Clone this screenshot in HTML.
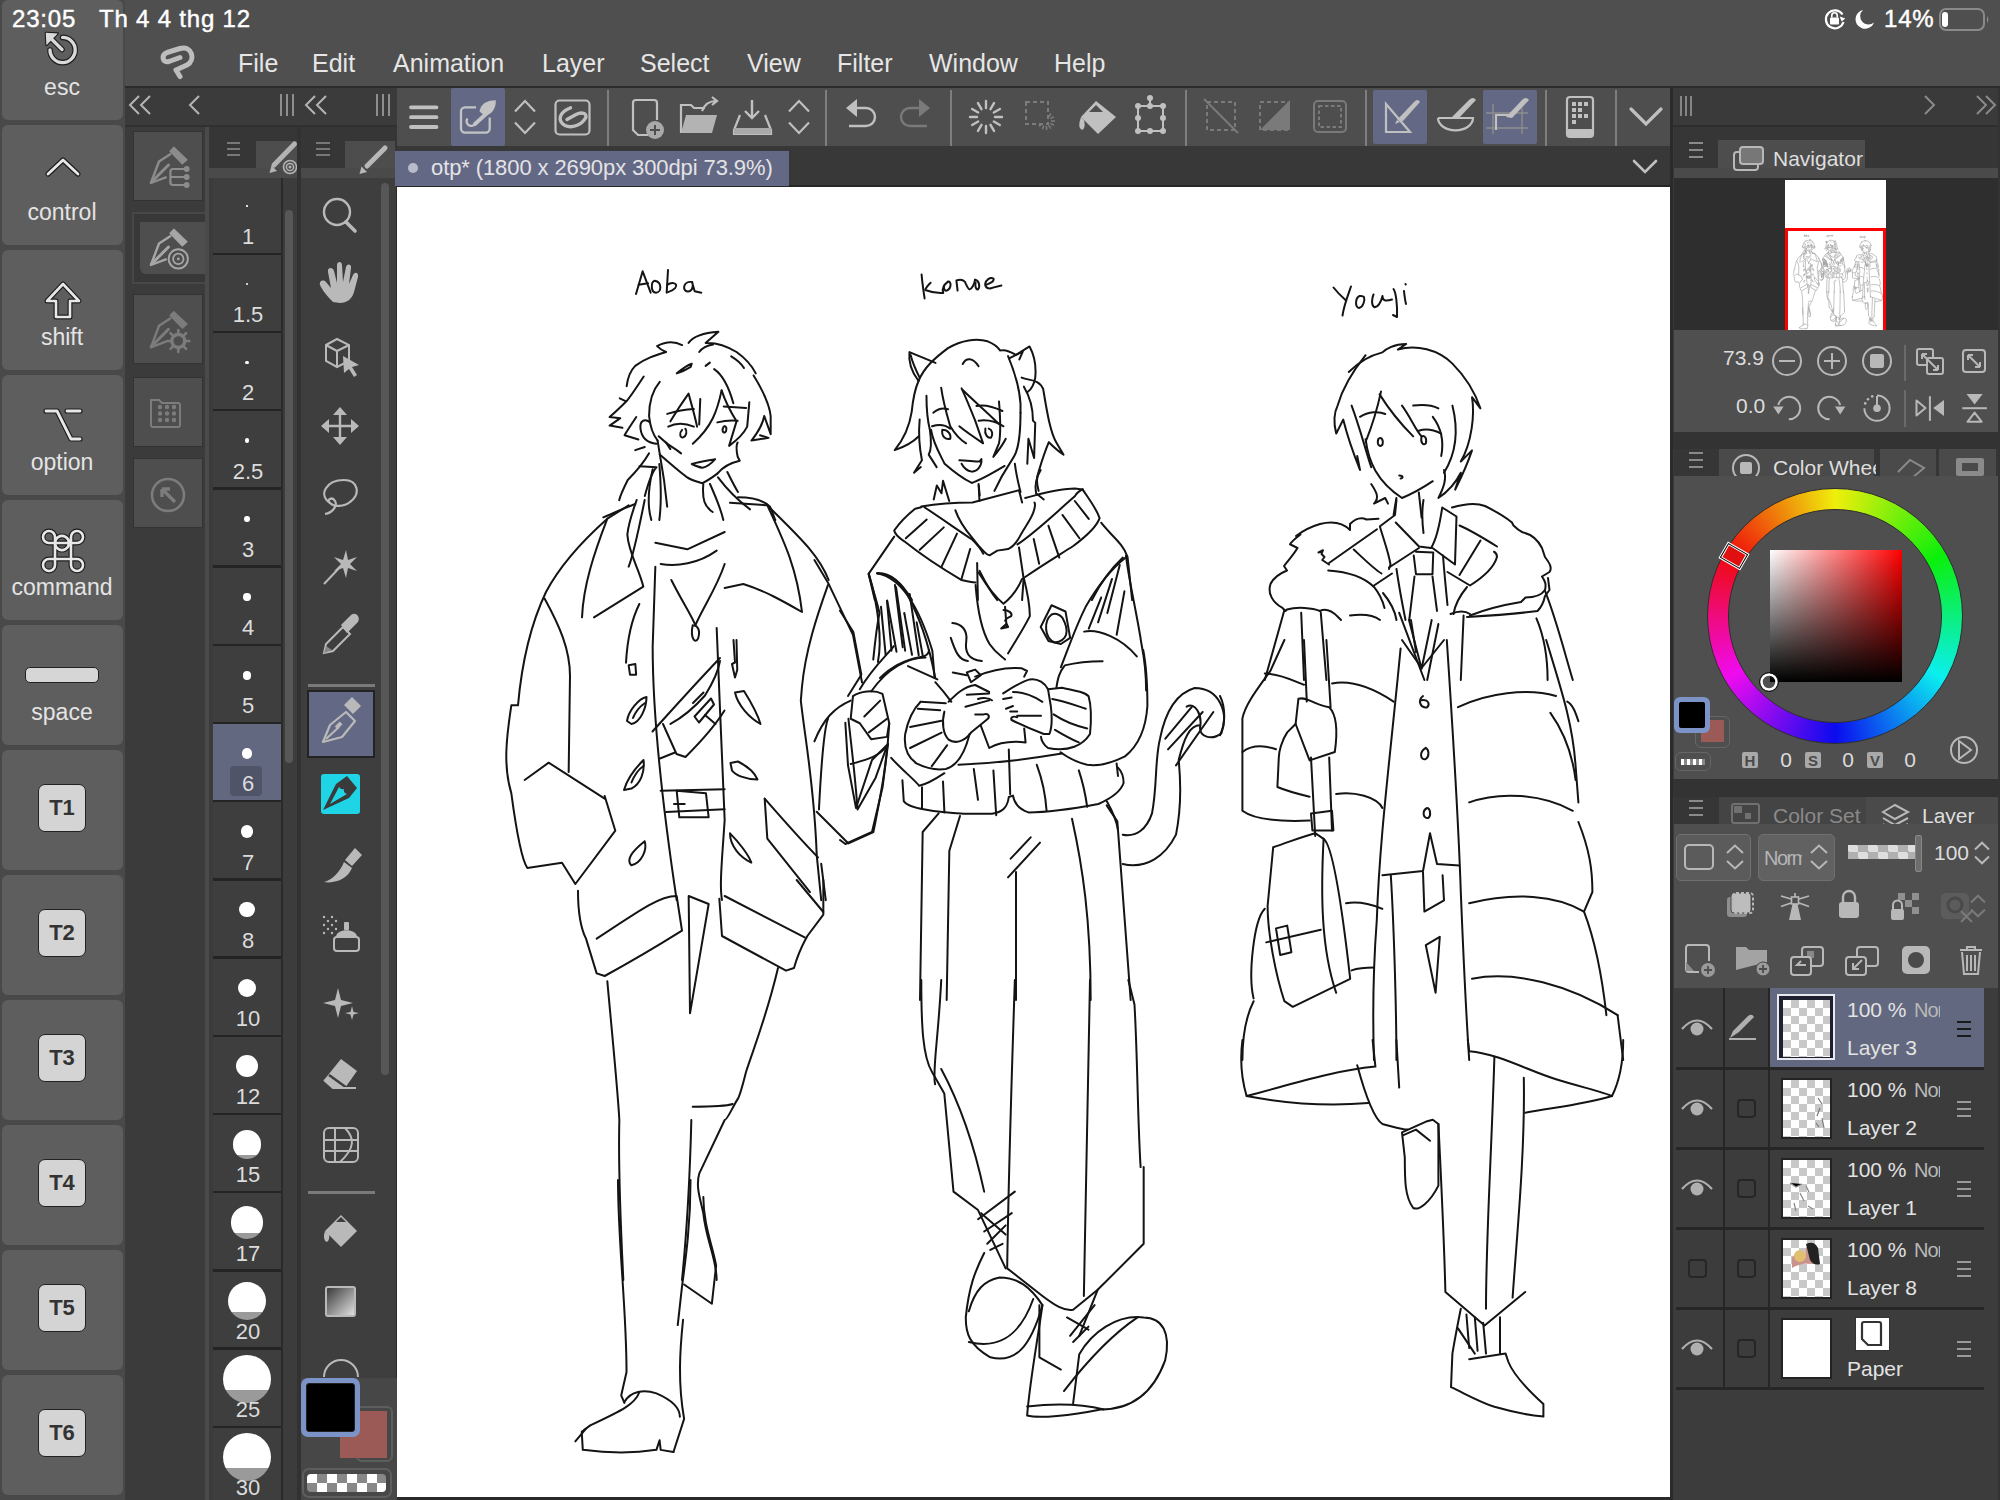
<!DOCTYPE html><html><head><meta charset="utf-8"><style>
*{margin:0;padding:0;box-sizing:border-box}
html,body{width:2000px;height:1500px;overflow:hidden;background:#3b3b3b;font-family:"Liberation Sans",sans-serif}
.ab{position:absolute}
.t{position:absolute;white-space:nowrap;line-height:1}
svg{position:absolute;overflow:visible}
</style></head><body>
<div class="ab" style="left:0px;top:0px;width:2000px;height:86px;background:#4f4f4f;"></div>
<div class="ab" style="left:0px;top:86px;width:2000px;height:2px;background:#2c2c2c;"></div>
<div class="ab" style="left:0px;top:0px;width:125px;height:1500px;background:#494949;"></div>
<div class="ab" style="left:2px;top:0px;width:121px;height:120px;background:#5e5e5e;border-radius:6px"></div>
<div class="ab" style="left:2px;top:125px;width:121px;height:120px;background:#5e5e5e;border-radius:6px"></div>
<div class="ab" style="left:2px;top:250px;width:121px;height:120px;background:#5e5e5e;border-radius:6px"></div>
<div class="ab" style="left:2px;top:375px;width:121px;height:120px;background:#5e5e5e;border-radius:6px"></div>
<div class="ab" style="left:2px;top:500px;width:121px;height:120px;background:#5e5e5e;border-radius:6px"></div>
<div class="ab" style="left:2px;top:625px;width:121px;height:120px;background:#5e5e5e;border-radius:6px"></div>
<div class="ab" style="left:2px;top:750px;width:121px;height:120px;background:#5e5e5e;border-radius:6px"></div>
<div class="ab" style="left:2px;top:875px;width:121px;height:120px;background:#5e5e5e;border-radius:6px"></div>
<div class="ab" style="left:2px;top:1000px;width:121px;height:120px;background:#5e5e5e;border-radius:6px"></div>
<div class="ab" style="left:2px;top:1125px;width:121px;height:120px;background:#5e5e5e;border-radius:6px"></div>
<div class="ab" style="left:2px;top:1250px;width:121px;height:120px;background:#5e5e5e;border-radius:6px"></div>
<div class="ab" style="left:2px;top:1375px;width:121px;height:120px;background:#5e5e5e;border-radius:6px"></div>
<div class="t" style="left:-0.5px;top:76px;width:125px;text-align:center;font-size:23px;color:#e4e4e4;">esc</div>
<div class="t" style="left:-0.5px;top:201px;width:125px;text-align:center;font-size:23px;color:#e4e4e4;">control</div>
<div class="t" style="left:-0.5px;top:326px;width:125px;text-align:center;font-size:23px;color:#e4e4e4;">shift</div>
<div class="t" style="left:-0.5px;top:451px;width:125px;text-align:center;font-size:23px;color:#e4e4e4;">option</div>
<div class="t" style="left:-0.5px;top:576px;width:125px;text-align:center;font-size:23px;color:#e4e4e4;">command</div>
<div class="t" style="left:-0.5px;top:701px;width:125px;text-align:center;font-size:23px;color:#e4e4e4;">space</div>
<svg style="left:0px;top:0px" width="10" height="10" viewBox="0 0 10 10"><path d="M62.6 37.4 A12.6 12.6 0 1 1 50 50 M62 49.5 L51 38.5" fill="none" stroke="#1e1e1e" stroke-width="5.6" stroke-linecap="round"/><path d="M45.8 32.8 L57.8 33.4 L46.4 45.2 Z" fill="#1e1e1e" stroke="#1e1e1e" stroke-width="2.2" stroke-linejoin="round"/><path d="M62.6 37.4 A12.6 12.6 0 1 1 50 50 M62 49.5 L51 38.5" fill="none" stroke="#dadada" stroke-width="3.4" stroke-linecap="round"/><path d="M45.8 32.8 L57.8 33.4 L46.4 45.2 Z" fill="#dadada"/></svg>
<svg style="left:40px;top:150px" width="46" height="30" viewBox="0 0 46 30"><path d="M8 24 L23 10 L38 24" fill="none" stroke="#1e1e1e" stroke-width="5.199999999999999" stroke-linecap="round" stroke-linejoin="round"/><path d="M8 24 L23 10 L38 24" fill="none" stroke="#e8e8e8" stroke-width="2.8" stroke-linecap="round" stroke-linejoin="round"/></svg>
<svg style="left:40px;top:280px" width="46" height="46" viewBox="0 0 46 46"><path d="M23 4 L39 21 L30 21 L30 37 L16 37 L16 21 L7 21 Z" fill="none" stroke="#1e1e1e" stroke-width="5.0" stroke-linecap="round" stroke-linejoin="round"/><path d="M23 4 L39 21 L30 21 L30 37 L16 37 L16 21 L7 21 Z" fill="none" stroke="#e8e8e8" stroke-width="2.6" stroke-linecap="round" stroke-linejoin="round"/></svg>
<svg style="left:40px;top:405px" width="46" height="40" viewBox="0 0 46 40"><path d="M6 6 L17 6 L31 34 L40 34 M27 6 L40 6" fill="none" stroke="#1e1e1e" stroke-width="5.199999999999999" stroke-linecap="round" stroke-linejoin="round"/><path d="M6 6 L17 6 L31 34 L40 34 M27 6 L40 6" fill="none" stroke="#e8e8e8" stroke-width="2.8" stroke-linecap="round" stroke-linejoin="round"/></svg>
<svg style="left:40px;top:528px" width="46" height="46" viewBox="0 0 46 46"><path d="M15 15 L31 15 L31 31 L15 31 Z M15 15 A7 7 0 1 1 15 15.01 M15 15 L15 9 A6 6 0 1 0 9 15 L15 15 M31 15 L31 9 A6 6 0 1 1 37 15 L31 15 M31 31 L37 31 A6 6 0 1 1 31 37 L31 31 M15 31 L9 31 A6 6 0 1 0 15 37 L15 31" fill="none" stroke="#1e1e1e" stroke-width="5.0" stroke-linecap="round" stroke-linejoin="round"/><path d="M15 15 L31 15 L31 31 L15 31 Z M15 15 A7 7 0 1 1 15 15.01 M15 15 L15 9 A6 6 0 1 0 9 15 L15 15 M31 15 L31 9 A6 6 0 1 1 37 15 L31 15 M31 31 L37 31 A6 6 0 1 1 31 37 L31 31 M15 31 L9 31 A6 6 0 1 0 15 37 L15 31" fill="none" stroke="#e8e8e8" stroke-width="2.6" stroke-linecap="round" stroke-linejoin="round"/></svg>
<div class="ab" style="left:25px;top:667px;width:74px;height:16px;background:#d6d6d6;border:1.5px solid #222;border-radius:5px"></div>
<div class="ab" style="left:38px;top:784px;width:48px;height:48px;background:#d4d4d4;border:1.5px solid #222;border-radius:7px"></div>
<div class="t" style="left:32.0px;top:797px;width:60px;text-align:center;font-size:22px;color:#333;font-weight:bold">T1</div>
<div class="ab" style="left:38px;top:909px;width:48px;height:48px;background:#d4d4d4;border:1.5px solid #222;border-radius:7px"></div>
<div class="t" style="left:32.0px;top:922px;width:60px;text-align:center;font-size:22px;color:#333;font-weight:bold">T2</div>
<div class="ab" style="left:38px;top:1034px;width:48px;height:48px;background:#d4d4d4;border:1.5px solid #222;border-radius:7px"></div>
<div class="t" style="left:32.0px;top:1047px;width:60px;text-align:center;font-size:22px;color:#333;font-weight:bold">T3</div>
<div class="ab" style="left:38px;top:1159px;width:48px;height:48px;background:#d4d4d4;border:1.5px solid #222;border-radius:7px"></div>
<div class="t" style="left:32.0px;top:1172px;width:60px;text-align:center;font-size:22px;color:#333;font-weight:bold">T4</div>
<div class="ab" style="left:38px;top:1284px;width:48px;height:48px;background:#d4d4d4;border:1.5px solid #222;border-radius:7px"></div>
<div class="t" style="left:32.0px;top:1297px;width:60px;text-align:center;font-size:22px;color:#333;font-weight:bold">T5</div>
<div class="ab" style="left:38px;top:1409px;width:48px;height:48px;background:#d4d4d4;border:1.5px solid #222;border-radius:7px"></div>
<div class="t" style="left:32.0px;top:1422px;width:60px;text-align:center;font-size:22px;color:#333;font-weight:bold">T6</div>
<div class="t" style="left:12px;top:7px;font-size:24px;color:#ffffff;-webkit-text-stroke:0.45px #fff;letter-spacing:0.8px">23:05</div>
<div class="t" style="left:99px;top:7px;font-size:24px;color:#ffffff;-webkit-text-stroke:0.45px #fff;letter-spacing:0.8px">Th 4 4 thg 12</div>
<div class="t" style="left:1884px;top:7px;font-size:24px;color:#ffffff;-webkit-text-stroke:0.45px #fff;letter-spacing:0.8px">14%</div>
<svg style="left:0px;top:0px" width="10" height="10" viewBox="0 0 10 10"><path d="M1842.5 14.5 A9 9 0 1 0 1843.5 22" fill="none" stroke="#fff" stroke-width="2.2"/><path d="M1839 17.5 L1845 17.5 L1842.5 21.5 Z" fill="#fff" transform="rotate(20 1842 19)"/><rect x="1830" y="17.5" width="9" height="7" rx="1" fill="#fff"/><path d="M1831.8 17.5 V15.5 A2.7 2.7 0 0 1 1837.2 15.5 V17.5" fill="none" stroke="#fff" stroke-width="1.6"/></svg>
<svg style="left:0px;top:0px" width="10" height="10" viewBox="0 0 10 10"><path d="M1863 10 A9.5 9.5 0 1 0 1874 22.5 A8 8 0 0 1 1863 10 Z" fill="#fff"/></svg>
<div class="ab" style="left:1939px;top:8px;width:46px;height:23px;background:transparent;border:2px solid #8a8a8a;border-radius:7px"></div>
<div class="ab" style="left:1942px;top:12px;width:6px;height:15px;background:#fff;border-radius:3px"></div>
<svg style="left:0px;top:0px" width="10" height="10" viewBox="0 0 10 10"><path d="M1987 16 Q1990 19.5 1987 23 Z" fill="#8a8a8a"/></svg>
<svg style="left:0px;top:0px" width="10" height="10" viewBox="0 0 10 10"><path d="M180 57.5 L169 61.5 C162 63 161 55 167 52.5 L180 48.5 C192 45 196 60 187 65 L176 70 L180 76.5" fill="none" stroke="#bdbdbd" stroke-width="5" stroke-linecap="round" stroke-linejoin="round"/></svg>
<div class="t" style="left:238px;top:51px;font-size:25px;color:#e6e6e6;">File</div>
<div class="t" style="left:312px;top:51px;font-size:25px;color:#e6e6e6;">Edit</div>
<div class="t" style="left:393px;top:51px;font-size:25px;color:#e6e6e6;">Animation</div>
<div class="t" style="left:542px;top:51px;font-size:25px;color:#e6e6e6;">Layer</div>
<div class="t" style="left:640px;top:51px;font-size:25px;color:#e6e6e6;">Select</div>
<div class="t" style="left:747px;top:51px;font-size:25px;color:#e6e6e6;">View</div>
<div class="t" style="left:837px;top:51px;font-size:25px;color:#e6e6e6;">Filter</div>
<div class="t" style="left:929px;top:51px;font-size:25px;color:#e6e6e6;">Window</div>
<div class="t" style="left:1054px;top:51px;font-size:25px;color:#e6e6e6;">Help</div>
<div class="ab" style="left:125px;top:88px;width:272px;height:1412px;background:#3b3b3b;"></div>
<svg style="left:0px;top:0px" width="10" height="10" viewBox="0 0 10 10"><path d="M139 96 L130 105 L139 114 M150 96 L141 105 L150 114 " fill="none" stroke="#b4b4b4" stroke-width="2"/><path d="M199 96 L190 105 L199 114 " fill="none" stroke="#b4b4b4" stroke-width="2"/><path d="M315 96 L306 105 L315 114 M326 96 L317 105 L326 114 " fill="none" stroke="#b4b4b4" stroke-width="2"/></svg>
<svg style="left:0px;top:0px" width="10" height="10" viewBox="0 0 10 10"><path d="M281 94 V116 M287 94 V116 M293 94 V116" stroke="#8e8e8e" stroke-width="2"/><path d="M377 94 V116 M383 94 V116 M389 94 V116" stroke="#8e8e8e" stroke-width="2"/></svg>
<div class="ab" style="left:125px;top:125px;width:272px;height:2px;background:#303030;"></div>
<div class="ab" style="left:205px;top:127px;width:4px;height:1373px;background:#4a4a4a;"></div>
<div class="ab" style="left:133px;top:294px;width:70px;height:70px;background:#4e4e4e;border:1.5px solid #333"></div>
<div class="ab" style="left:133px;top:377px;width:70px;height:70px;background:#4e4e4e;border:1.5px solid #333"></div>
<div class="ab" style="left:133px;top:458px;width:70px;height:70px;background:#4e4e4e;border:1.5px solid #333"></div>
<div class="ab" style="left:132px;top:212px;width:73px;height:72px;background:#383838;border:2px solid #474747;border-right:none"></div>
<div class="ab" style="left:140px;top:222px;width:65px;height:52px;background:#4e4e4e;border-radius:0 0 0 6px"></div>
<div class="ab" style="left:133px;top:131px;width:70px;height:70px;background:#4e4e4e;border:1.5px solid #333"></div>
<svg style="left:0px;top:0px" width="10" height="10" viewBox="0 0 10 10"><g transform="translate(150.5,183)" fill="none" stroke="#8c8c8c" stroke-linejoin="round" stroke-linecap="round"><path d="M19.7 -31.7 L23.3 -35.6 L36.3 -23.2 L31.8 -19.2 Z" fill="#8c8c8c" stroke-width="1.5"/><path d="M19.7 -28.8 L8.5 -21.5 L0.4 0 L15.3 -5.6" stroke-width="2.4"/><path d="M1 -1 L18 -18" stroke-width="3"/></g><path d="M186.7 169 H173 Q170.4 169 170.4 171.5 V182.5 Q170.4 185 173 185 H186.7 M170.4 177 H186.7" fill="none" stroke="#8c8c8c" stroke-width="2.2"/><circle cx="186.7" cy="169" r="2.9" fill="#8c8c8c"/><circle cx="186.7" cy="177" r="2.9" fill="#8c8c8c"/><circle cx="186.7" cy="185" r="2.9" fill="#8c8c8c"/></svg>
<svg style="left:0px;top:0px" width="10" height="10" viewBox="0 0 10 10"><g transform="translate(150.5,265)" fill="none" stroke="#a6a6a6" stroke-linejoin="round" stroke-linecap="round"><path d="M19.7 -31.7 L23.3 -35.6 L36.3 -23.2 L31.8 -19.2 Z" fill="#a6a6a6" stroke-width="1.5"/><path d="M19.7 -28.8 L8.5 -21.5 L0.4 0 L15.3 -5.6" stroke-width="2.4"/><path d="M1 -1 L18 -18" stroke-width="3"/></g><circle cx="178.3" cy="258.9" r="9.6" fill="#4e4e4e" stroke="#a6a6a6" stroke-width="2"/><circle cx="178.3" cy="258.9" r="5.2" fill="none" stroke="#a6a6a6" stroke-width="1.8"/><circle cx="178.3" cy="258.9" r="1.4" fill="#a6a6a6"/></svg>
<svg style="left:0px;top:0px" width="10" height="10" viewBox="0 0 10 10"><g transform="translate(150.5,347.3)" fill="none" stroke="#7c7c7c" stroke-linejoin="round" stroke-linecap="round"><path d="M19.7 -31.7 L23.3 -35.6 L36.3 -23.2 L31.8 -19.2 Z" fill="#7c7c7c" stroke-width="1.5"/><path d="M19.7 -28.8 L8.5 -21.5 L0.4 0 L15.3 -5.6" stroke-width="2.4"/><path d="M1 -1 L18 -18" stroke-width="3"/></g><path d="M185.3 341.0 L189.3 341.0" stroke="#7c7c7c" stroke-width="2.6" stroke-linecap="round"/><path d="M183.2 345.9 L186.1 348.8" stroke="#7c7c7c" stroke-width="2.6" stroke-linecap="round"/><path d="M178.3 348.0 L178.3 352.0" stroke="#7c7c7c" stroke-width="2.6" stroke-linecap="round"/><path d="M173.4 345.9 L170.5 348.8" stroke="#7c7c7c" stroke-width="2.6" stroke-linecap="round"/><path d="M171.3 341.0 L167.3 341.0" stroke="#7c7c7c" stroke-width="2.6" stroke-linecap="round"/><path d="M173.4 336.1 L170.5 333.2" stroke="#7c7c7c" stroke-width="2.6" stroke-linecap="round"/><path d="M178.3 334.0 L178.3 330.0" stroke="#7c7c7c" stroke-width="2.6" stroke-linecap="round"/><path d="M183.2 336.1 L186.1 333.2" stroke="#7c7c7c" stroke-width="2.6" stroke-linecap="round"/><circle cx="178.3" cy="341" r="6.5" fill="none" stroke="#7c7c7c" stroke-width="3.4"/></svg>
<svg style="left:0px;top:0px" width="10" height="10" viewBox="0 0 10 10"><path d="M151 400 h8 l3 3 h16 a2 2 0 0 1 2 2 v20 a2 2 0 0 1 -2 2 h-25 a2 2 0 0 1 -2 -2 z" fill="none" stroke="#7c7c7c" stroke-width="2"/><circle cx="160" cy="407.0" r="2.2" fill="#7c7c7c"/><circle cx="160" cy="413.5" r="2.2" fill="#7c7c7c"/><circle cx="160" cy="420.0" r="2.2" fill="#7c7c7c"/><circle cx="167" cy="407.0" r="2.2" fill="#7c7c7c"/><circle cx="167" cy="413.5" r="2.2" fill="#7c7c7c"/><circle cx="167" cy="420.0" r="2.2" fill="#7c7c7c"/><circle cx="174" cy="407.0" r="2.2" fill="#7c7c7c"/><circle cx="174" cy="413.5" r="2.2" fill="#7c7c7c"/><circle cx="174" cy="420.0" r="2.2" fill="#7c7c7c"/></svg>
<svg style="left:0px;top:0px" width="10" height="10" viewBox="0 0 10 10"><circle cx="168" cy="495" r="16" fill="none" stroke="#7c7c7c" stroke-width="2.6"/><path d="M163 490 L175 502 M162 489 L162 497 M162 489 L170 489" fill="none" stroke="#7c7c7c" stroke-width="3.4"/></svg>
<div class="ab" style="left:209px;top:127px;width:88px;height:41px;background:#363636;"></div>
<div class="ab" style="left:256px;top:141px;width:41px;height:27px;background:#4d4d4d;"></div>
<div class="ab" style="left:209px;top:168px;width:88px;height:10px;background:#4a4a4a;"></div>
<svg style="left:0px;top:0px" width="10" height="10" viewBox="0 0 10 10"><path d="M227 143 h13 M227 149 h13 M227 155 h13" stroke="#8e8e8e" stroke-width="1.4"/></svg>
<svg style="left:0px;top:0px" width="10" height="10" viewBox="0 0 10 10"><path d="M274 165 L294.5 144" stroke="#b3b3b3" stroke-width="5" stroke-linecap="round"/><path d="M269.5 173 L271.5 165.5 L277 171 Z" fill="#b3b3b3"/><circle cx="290" cy="167" r="8.5" fill="#4d4d4d"/><circle cx="290" cy="167" r="6.5" fill="none" stroke="#b3b3b3" stroke-width="1.6"/><circle cx="290" cy="167" r="3.6" fill="none" stroke="#b3b3b3" stroke-width="1.5"/><circle cx="290" cy="167" r="1.5" fill="#b3b3b3"/></svg>
<div class="ab" style="left:297px;top:127px;width:4px;height:1373px;background:#323232;"></div>
<div class="ab" style="left:301px;top:127px;width:96px;height:41px;background:#363636;"></div>
<div class="ab" style="left:345px;top:141px;width:50px;height:27px;background:#4d4d4d;"></div>
<div class="ab" style="left:301px;top:168px;width:96px;height:10px;background:#4a4a4a;"></div>
<svg style="left:0px;top:0px" width="10" height="10" viewBox="0 0 10 10"><path d="M316 143 h14 M316 149 h14 M316 155 h14" stroke="#8e8e8e" stroke-width="1.4"/></svg>
<svg style="left:0px;top:0px" width="10" height="10" viewBox="0 0 10 10"><path d="M367 166 L385 148" stroke="#b8b8b8" stroke-width="5" stroke-linecap="round"/><path d="M359.5 174 L361.5 166.5 L367 172 Z" fill="#b8b8b8"/></svg>
<div class="ab" style="left:213px;top:178px;width:68px;height:1322px;background:#3e3e3e;"></div>
<div class="ab" style="left:213px;top:252.5px;width:68px;height:2.5px;background:#242424;"></div>
<div class="ab" style="left:246.2px;top:205.2px;width:1.6px;height:1.6px;border-radius:50%;background:#fff"></div>
<div class="t" style="left:213.0px;top:226.0px;width:70px;text-align:center;font-size:22px;color:#dcdcdc;">1</div>
<div class="ab" style="left:213px;top:330.7px;width:68px;height:2.5px;background:#242424;"></div>
<div class="ab" style="left:245.9px;top:283.09999999999997px;width:2.2px;height:2.2px;border-radius:50%;background:#fff"></div>
<div class="t" style="left:213.0px;top:304.2px;width:70px;text-align:center;font-size:22px;color:#dcdcdc;">1.5</div>
<div class="ab" style="left:213px;top:408.9px;width:68px;height:2.5px;background:#242424;"></div>
<div class="ab" style="left:245.1px;top:360.5px;width:3.8px;height:3.8px;border-radius:50%;background:#fff"></div>
<div class="t" style="left:213.0px;top:382.4px;width:70px;text-align:center;font-size:22px;color:#dcdcdc;">2</div>
<div class="ab" style="left:213px;top:487.1px;width:68px;height:2.5px;background:#242424;"></div>
<div class="ab" style="left:244.6px;top:438.20000000000005px;width:4.8px;height:4.8px;border-radius:50%;background:#fff"></div>
<div class="t" style="left:213.0px;top:460.6px;width:70px;text-align:center;font-size:22px;color:#dcdcdc;">2.5</div>
<div class="ab" style="left:213px;top:565.3px;width:68px;height:2.5px;background:#242424;"></div>
<div class="ab" style="left:244.1px;top:515.9px;width:5.8px;height:5.8px;border-radius:50%;background:#fff"></div>
<div class="t" style="left:213.0px;top:538.8px;width:70px;text-align:center;font-size:22px;color:#dcdcdc;">3</div>
<div class="ab" style="left:213px;top:643.5px;width:68px;height:2.5px;background:#242424;"></div>
<div class="ab" style="left:243.3px;top:593.3px;width:7.4px;height:7.4px;border-radius:50%;background:#fff"></div>
<div class="t" style="left:213.0px;top:617.0px;width:70px;text-align:center;font-size:22px;color:#dcdcdc;">4</div>
<div class="ab" style="left:213px;top:721.7px;width:68px;height:2.5px;background:#242424;"></div>
<div class="ab" style="left:242.6px;top:670.8000000000001px;width:8.8px;height:8.8px;border-radius:50%;background:#fff"></div>
<div class="t" style="left:213.0px;top:695.2px;width:70px;text-align:center;font-size:22px;color:#dcdcdc;">5</div>
<div class="ab" style="left:213px;top:724.4px;width:68px;height:77px;background:#62687f;"></div>
<div class="ab" style="left:230px;top:766.4px;width:32px;height:30px;background:#4f5468;border-radius:4px"></div>
<div class="ab" style="left:213px;top:799.9px;width:68px;height:2.5px;background:#242424;"></div>
<div class="ab" style="left:241.8px;top:748.1999999999999px;width:10.4px;height:10.4px;border-radius:50%;background:#fff"></div>
<div class="t" style="left:213.0px;top:773.4px;width:70px;text-align:center;font-size:22px;color:#dcdcdc;">6</div>
<div class="ab" style="left:213px;top:878.1px;width:68px;height:2.5px;background:#242424;"></div>
<div class="ab" style="left:240.8px;top:825.4px;width:12.4px;height:12.4px;border-radius:50%;background:#fff"></div>
<div class="t" style="left:213.0px;top:851.6px;width:70px;text-align:center;font-size:22px;color:#dcdcdc;">7</div>
<div class="ab" style="left:213px;top:956.3000000000001px;width:68px;height:2.5px;background:#242424;"></div>
<div class="ab" style="left:239.3px;top:902.1px;width:15.4px;height:15.4px;border-radius:50%;background:#fff"></div>
<div class="t" style="left:213.0px;top:929.8000000000001px;width:70px;text-align:center;font-size:22px;color:#dcdcdc;">8</div>
<div class="ab" style="left:213px;top:1034.5px;width:68px;height:2.5px;background:#242424;"></div>
<div class="ab" style="left:237.7px;top:978.7px;width:18.6px;height:18.6px;border-radius:50%;background:#fff"></div>
<div class="t" style="left:213.0px;top:1008.0px;width:70px;text-align:center;font-size:22px;color:#dcdcdc;">10</div>
<div class="ab" style="left:213px;top:1112.7px;width:68px;height:2.5px;background:#242424;"></div>
<div class="ab" style="left:236px;top:1055.2px;width:22px;height:22px;border-radius:50%;background:#fff"></div>
<div class="t" style="left:213.0px;top:1086.2px;width:70px;text-align:center;font-size:22px;color:#dcdcdc;">12</div>
<div class="ab" style="left:213px;top:1190.9px;width:68px;height:2.5px;background:#242424;"></div>
<div class="ab" style="left:232.6px;top:1130.0px;width:28.8px;height:28.8px;border-radius:50%;background:linear-gradient(#fff 0,#fff 25.4px,#9a9a9a 25.4px)"></div>
<div class="t" style="left:213.0px;top:1164.4px;width:70px;text-align:center;font-size:22px;color:#dcdcdc;">15</div>
<div class="ab" style="left:213px;top:1269.1px;width:68px;height:2.5px;background:#242424;"></div>
<div class="ab" style="left:230.6px;top:1206.1999999999998px;width:32.8px;height:32.8px;border-radius:50%;background:linear-gradient(#fff 0,#fff 27.4px,#9a9a9a 27.4px)"></div>
<div class="t" style="left:213.0px;top:1242.6px;width:70px;text-align:center;font-size:22px;color:#dcdcdc;">17</div>
<div class="ab" style="left:213px;top:1347.3px;width:68px;height:2.5px;background:#242424;"></div>
<div class="ab" style="left:228px;top:1281.8px;width:38px;height:38px;border-radius:50%;background:linear-gradient(#fff 0,#fff 30px,#9a9a9a 30px)"></div>
<div class="t" style="left:213.0px;top:1320.8px;width:70px;text-align:center;font-size:22px;color:#dcdcdc;">20</div>
<div class="ab" style="left:213px;top:1425.5px;width:68px;height:2.5px;background:#242424;"></div>
<div class="ab" style="left:223px;top:1355.0px;width:48px;height:48px;border-radius:50%;background:linear-gradient(#fff 0,#fff 35px,#9a9a9a 35px)"></div>
<div class="t" style="left:213.0px;top:1399.0px;width:70px;text-align:center;font-size:22px;color:#dcdcdc;">25</div>
<div class="ab" style="left:213px;top:1503.7px;width:68px;height:2.5px;background:#242424;"></div>
<div class="ab" style="left:223px;top:1433.2px;width:48px;height:48px;border-radius:50%;background:linear-gradient(#fff 0,#fff 35px,#9a9a9a 35px)"></div>
<div class="t" style="left:213.0px;top:1477.2px;width:70px;text-align:center;font-size:22px;color:#dcdcdc;">30</div>
<div class="ab" style="left:281px;top:178px;width:2px;height:1322px;background:#2a2a2a;"></div>
<div class="ab" style="left:283px;top:178px;width:14px;height:1322px;background:#3c3c3c;"></div>
<div class="ab" style="left:285px;top:210px;width:8px;height:553px;background:#575757;border-radius:4px"></div>
<div class="ab" style="left:301px;top:178px;width:96px;height:1322px;background:#3e3e3e;"></div>
<div class="ab" style="left:381px;top:183px;width:8px;height:892px;background:#575757;border-radius:4px"></div>
<div class="ab" style="left:396px;top:178px;width:1px;height:1322px;background:#2a2a2a;"></div>
<div class="ab" style="left:308px;top:684px;width:67px;height:3px;background:#7a7a7a;"></div>
<div class="ab" style="left:308px;top:1191px;width:67px;height:3px;background:#7a7a7a;"></div>
<div class="ab" style="left:307px;top:690px;width:68px;height:68px;background:#232323;"></div>
<div class="ab" style="left:309px;top:692px;width:64px;height:64px;background:#636985;"></div>
<div class="ab" style="left:321px;top:774px;width:39px;height:40px;background:#1fd5e5;border-radius:3px"></div>
<svg style="left:0px;top:0px" width="10" height="10" viewBox="0 0 10 10"><circle cx="337" cy="212" r="13" fill="none" stroke="#b9b9b9" stroke-width="2.4"/><path d="M346 222 L355 231" stroke="#b9b9b9" stroke-width="3.6" stroke-linecap="round"/></svg>
<svg style="left:0px;top:0px" width="10" height="10" viewBox="0 0 10 10"><path d="M333 302 C328 297 322 290 320 285 C319 281 323 279 326 282 L331 288 L328 272 C327 267 333 267 334 271 L337 283 L337 265 C337 261 342 261 342 265 L343 282 L346 267 C347 263 352 264 351 268 L349 284 L353 275 C355 271 359 273 358 277 L354 292 C352 299 347 303 340 303 Z" fill="#b9b9b9"/></svg>
<svg style="left:0px;top:0px" width="10" height="10" viewBox="0 0 10 10"><path d="M326 345 L337 339 L349 345 L349 361 L337 367 L326 361 Z M326 345 L337 351 L349 345 M337 351 L337 367" fill="none" stroke="#b9b9b9" stroke-width="2"/><path d="M343 356 L359 365 L352 367 L357 375 L354 377 L349 369 L344 373 Z" fill="#b9b9b9"/></svg>
<svg style="left:0px;top:0px" width="10" height="10" viewBox="0 0 10 10"><path d="M340 409 V443 M323 426 H357" stroke="#b9b9b9" stroke-width="2.4"/><path d="M340 407 L333 415 H347 Z M340 445 L333 437 H347 Z M321 426 L329 419 V433 Z M359 426 L351 419 V433 Z" fill="#b9b9b9"/></svg>
<svg style="left:0px;top:0px" width="10" height="10" viewBox="0 0 10 10"><path d="M330 503 C318 495 326 480 344 480 C358 480 361 494 350 502 C344 507 334 507 330 503 C326 500 332 496 335 501 C338 506 332 513 325 514" fill="none" stroke="#b9b9b9" stroke-width="2.2"/></svg>
<svg style="left:0px;top:0px" width="10" height="10" viewBox="0 0 10 10"><path d="M324 584 L342 565" stroke="#b9b9b9" stroke-width="2"/><path d="M346 550 L348 560 L357 557 L350 564 L357 571 L348 568 L346 578 L343 568 L334 571 L341 564 L334 557 L343 560 Z" fill="#b9b9b9"/></svg>
<svg style="left:0px;top:0px" width="10" height="10" viewBox="0 0 10 10"><path d="M324 653 L326 644 L343 627 L350 634 L333 651 Z" fill="none" stroke="#b9b9b9" stroke-width="2"/><path d="M324 653 L326 646 L332 650 Z" fill="#888"/><path d="M341 625 L351 615 Q355 612 358 616 Q360 620 357 623 L347 633 Z" fill="#b9b9b9"/></svg>
<svg style="left:0px;top:0px" width="10" height="10" viewBox="0 0 10 10"><path d="M323 742 L330 725 L346 712 L355 721 L342 737 Z" fill="none" stroke="#b9b9b9" stroke-width="2.2" stroke-linejoin="round"/><path d="M344 705 L352 697 L361 706 L353 714 Z" fill="#b9b9b9"/><path d="M326 739 L339 727" stroke="#b9b9b9" stroke-width="2"/><rect x="337" y="722" width="4" height="7" fill="#b9b9b9" transform="rotate(45 339 725)"/></svg>
<svg style="left:0px;top:0px" width="10" height="10" viewBox="0 0 10 10"><path d="M323 810 L336 784 L347 776 L357 788 L349 798 Z" fill="#3a3a3a"/><path d="M330 804 L339 787 Q341 790 344 789 Q343 793 347 794 Z" fill="#1fd5e5"/></svg>
<svg style="left:0px;top:0px" width="10" height="10" viewBox="0 0 10 10"><path d="M324 882 C332 880 340 872 344 862 L352 868 C348 878 336 884 324 882 Z" fill="#b9b9b9"/><path d="M345 860 L355 848 L362 855 L352 866 Z" fill="#b9b9b9"/></svg>
<svg style="left:0px;top:0px" width="10" height="10" viewBox="0 0 10 10"><rect x="334" y="937" width="25" height="14" rx="3" fill="none" stroke="#b9b9b9" stroke-width="2"/><path d="M336 937 C336 928 357 928 357 937 Z" fill="#b9b9b9"/><rect x="344" y="922" width="5" height="8" rx="1" fill="#b9b9b9"/><circle cx="324" cy="917" r="1.2" fill="#b9b9b9"/><circle cx="324" cy="925" r="1.2" fill="#b9b9b9"/><circle cx="324" cy="933" r="1.2" fill="#b9b9b9"/><circle cx="328" cy="921" r="1.2" fill="#b9b9b9"/><circle cx="328" cy="929" r="1.2" fill="#b9b9b9"/><circle cx="332" cy="917" r="1.2" fill="#b9b9b9"/><circle cx="332" cy="925" r="1.2" fill="#b9b9b9"/><circle cx="332" cy="933" r="1.2" fill="#b9b9b9"/><circle cx="336" cy="921" r="1.2" fill="#b9b9b9"/><circle cx="336" cy="929" r="1.2" fill="#b9b9b9"/></svg>
<svg style="left:0px;top:0px" width="10" height="10" viewBox="0 0 10 10"><path d="M338 988 L341 1000 L353 1003 L341 1006 L338 1018 L335 1006 L323 1003 L335 1000 Z" fill="#b9b9b9"/><path d="M352 1006 L353.5 1012 L359 1013 L353.5 1014.5 L352 1020 L350.5 1014.5 L345 1013 L350.5 1012 Z" fill="#b9b9b9"/></svg>
<svg style="left:0px;top:0px" width="10" height="10" viewBox="0 0 10 10"><path d="M341 1059 L357 1071 L345 1088 L333 1088 L324 1080 Z" fill="#b9b9b9"/><path d="M329 1075 L347 1088" stroke="#3e3e3e" stroke-width="2.5"/><path d="M324 1080 L333 1088 L356 1088" fill="none" stroke="#b9b9b9" stroke-width="2"/></svg>
<svg style="left:0px;top:0px" width="10" height="10" viewBox="0 0 10 10"><rect x="324" y="1128" width="34" height="34" rx="5" fill="none" stroke="#b9b9b9" stroke-width="2"/><path d="M324 1140 H358 M324 1151 H358 M335 1128 V1162 M345 1128 C355 1138 355 1148 340 1162" fill="none" stroke="#b9b9b9" stroke-width="2"/></svg>
<svg style="left:0px;top:0px" width="10" height="10" viewBox="0 0 10 10"><path d="M341 1215 L357 1231 L341 1247 L325 1231 Z" fill="#b9b9b9"/><path d="M336 1222 L346 1222 L341 1217 Z" fill="#3e3e3e"/><path d="M325 1231 Q322 1240 327 1242 Q330 1240 329 1234 Z" fill="#b9b9b9"/></svg>
<div class="ab" style="left:325px;top:1286px;width:31px;height:31px;border:2px solid #b9b9b9;border-radius:3px;background:linear-gradient(135deg,#3a3a3a,#e0e0e0)"></div>
<svg style="left:0px;top:0px" width="10" height="10" viewBox="0 0 10 10"><path d="M324 1377 A17 17 0 0 1 358 1377" fill="none" stroke="#b9b9b9" stroke-width="2"/></svg>
<div class="ab" style="left:301px;top:1378px;width:96px;height:122px;background:#474747;"></div>
<div class="ab" style="left:356px;top:1406px;width:37px;height:56px;background:transparent;border:2px solid #5e5e5e;border-radius:6px"></div>
<div class="ab" style="left:340px;top:1411px;width:47px;height:47px;background:#9b5a56;"></div>
<div class="ab" style="left:301px;top:1378px;width:59px;height:59px;background:#7c93c8;border-radius:7px"></div>
<div class="ab" style="left:306px;top:1383px;width:49px;height:49px;background:#000;border-radius:3px;border:1px solid #222"></div>
<div class="ab" style="left:302px;top:1468px;width:90px;height:30px;background:transparent;border:2px solid #5e5e5e;border-radius:7px"></div>
<div class="ab" style="left:307px;top:1474px;width:79px;height:18px;border-radius:4px;background-image:linear-gradient(45deg,#888 25%,transparent 25%,transparent 75%,#888 75%),linear-gradient(45deg,#888 25%,#fff 25%,#fff 75%,#888 75%);background-size:20px 18px;background-position:0 0,10px 9px"></div>
<div class="ab" style="left:397px;top:88px;width:1273px;height:58px;background:#4e4e4e;"></div>
<div class="ab" style="left:397px;top:146px;width:1273px;height:41px;background:#383838;"></div>
<div class="ab" style="left:397px;top:185px;width:1273px;height:2px;background:#262626;"></div>
<div class="ab" style="left:451px;top:88px;width:54px;height:58px;background:#636985;border-radius:2px"></div>
<div class="ab" style="left:1373px;top:90px;width:54px;height:54px;background:#636985;border-radius:2px"></div>
<div class="ab" style="left:1483px;top:90px;width:54px;height:54px;background:#636985;border-radius:2px"></div>
<div class="ab" style="left:607px;top:90px;width:2px;height:56px;background:#7e7e7e;"></div>
<div class="ab" style="left:825px;top:90px;width:2px;height:56px;background:#7e7e7e;"></div>
<div class="ab" style="left:950px;top:90px;width:2px;height:56px;background:#7e7e7e;"></div>
<div class="ab" style="left:1185px;top:90px;width:2px;height:56px;background:#7e7e7e;"></div>
<div class="ab" style="left:1365px;top:90px;width:2px;height:56px;background:#7e7e7e;"></div>
<div class="ab" style="left:1545px;top:90px;width:2px;height:56px;background:#7e7e7e;"></div>
<div class="ab" style="left:1615px;top:90px;width:2px;height:56px;background:#7e7e7e;"></div>
<svg style="left:0px;top:0px" width="10" height="10" viewBox="0 0 10 10"><path d="M411 107.3 h25.5 M411 117.2 h25.5 M411 127 h25.5" stroke="#c0c0c0" stroke-width="3.8" stroke-linecap="round"/></svg>
<svg style="left:0px;top:0px" width="10" height="10" viewBox="0 0 10 10"><path d="M476 107.3 H465 a4 4 0 0 0 -4 4 V128.6 a4 4 0 0 0 4 4 H485.7 a4 4 0 0 0 4 -4 V117.5" fill="none" stroke="#c4c4c4" stroke-width="2.3"/><path d="M486 114 L475 124" stroke="#c4c4c4" stroke-width="3.8" stroke-linecap="round"/><path d="M475 124 A4.6 4.6 0 1 1 467.5 118.5" fill="none" stroke="#c4c4c4" stroke-width="2.3"/><path d="M479.5 111.5 C481 104 486 100.5 495.8 100.3 C496 108 492.5 114 485 116 Z" fill="#c4c4c4"/></svg>
<svg style="left:0px;top:0px" width="10" height="10" viewBox="0 0 10 10"><path d="M515 111.54 L525 101.04 L535 111.54 M515 122.46 L525 132.96 L535 122.46" fill="none" stroke="#c0c0c0" stroke-width="2.2"/></svg>
<svg style="left:0px;top:0px" width="10" height="10" viewBox="0 0 10 10"><path d="M789 111.54 L799 101.04 L809 111.54 M789 122.46 L799 132.96 L809 122.46" fill="none" stroke="#c0c0c0" stroke-width="2.2"/></svg>
<svg style="left:0px;top:0px" width="10" height="10" viewBox="0 0 10 10"><rect x="555.5" y="100.5" width="34" height="34" rx="4" fill="none" stroke="#c0c0c0" stroke-width="2.2"/><path d="M570.5 107.8 C559 112 557 121 565 125.5 C572 129 582 124.5 585.5 118 C587.5 113.5 582 111.3 576 114.5 L567 119.5" fill="none" stroke="#c0c0c0" stroke-width="3.4" stroke-linecap="round"/></svg>
<svg style="left:0px;top:0px" width="10" height="10" viewBox="0 0 10 10"><path d="M636 100 h18 a3 3 0 0 1 3 3 v17 M636 100 a3 3 0 0 0 -3 3 v27 l5 5 h10" fill="none" stroke="#c0c0c0" stroke-width="2.2"/><circle cx="655" cy="130" r="9" fill="#a9a9a9"/><path d="M650 130 h10 M655 125 v10" stroke="#4e4e4e" stroke-width="2"/></svg>
<svg style="left:0px;top:0px" width="10" height="10" viewBox="0 0 10 10"><path d="M681 133 V105 h10 l3 3 h11" fill="none" stroke="#c0c0c0" stroke-width="2.2"/><path d="M681 133 L686 115 H717 L712 133 Z" fill="#b3b3b3"/><path d="M702 111 Q706 101 716 101 M712 97 L717 101 L712 105" fill="none" stroke="#c0c0c0" stroke-width="2.2"/></svg>
<svg style="left:0px;top:0px" width="10" height="10" viewBox="0 0 10 10"><path d="M740 115 L734 130 v4 h37 v-4 L765 115" fill="none" stroke="#c0c0c0" stroke-width="2.2"/><rect x="734" y="128" width="37" height="6" fill="#a9a9a9"/><path d="M752 100 V118 M745 111 L752 118 L759 111" fill="none" stroke="#c0c0c0" stroke-width="2.4"/></svg>
<svg style="left:0px;top:0px" width="10" height="10" viewBox="0 0 10 10"><path d="M856 108 h10 a9 9 0 0 1 0 18 h-17" fill="none" stroke="#c0c0c0" stroke-width="2.4"/><path d="M846 108 L857 99 V117 Z" fill="#c0c0c0"/></svg>
<svg style="left:0px;top:0px" width="10" height="10" viewBox="0 0 10 10"><path d="M920 108 h-10 a9 9 0 0 0 0 18 h17" fill="none" stroke="#7a7a7a" stroke-width="2.4"/><path d="M930 108 L919 99 V117 Z" fill="#7a7a7a"/></svg>
<svg style="left:0px;top:0px" width="10" height="10" viewBox="0 0 10 10"><path d="M995.0 117.0 L1002.0 117.0" stroke="#c0c0c0" stroke-width="2.4" stroke-linecap="round"/><path d="M993.8 121.5 L999.9 125.0" stroke="#c0c0c0" stroke-width="2.4" stroke-linecap="round"/><path d="M990.5 124.8 L994.0 130.9" stroke="#c0c0c0" stroke-width="2.4" stroke-linecap="round"/><path d="M986.0 126.0 L986.0 133.0" stroke="#c0c0c0" stroke-width="2.4" stroke-linecap="round"/><path d="M981.5 124.8 L978.0 130.9" stroke="#c0c0c0" stroke-width="2.4" stroke-linecap="round"/><path d="M978.2 121.5 L972.1 125.0" stroke="#c0c0c0" stroke-width="2.4" stroke-linecap="round"/><path d="M977.0 117.0 L970.0 117.0" stroke="#c0c0c0" stroke-width="2.4" stroke-linecap="round"/><path d="M978.2 112.5 L972.1 109.0" stroke="#c0c0c0" stroke-width="2.4" stroke-linecap="round"/><path d="M981.5 109.2 L978.0 103.1" stroke="#c0c0c0" stroke-width="2.4" stroke-linecap="round"/><path d="M986.0 108.0 L986.0 101.0" stroke="#c0c0c0" stroke-width="2.4" stroke-linecap="round"/><path d="M990.5 109.2 L994.0 103.1" stroke="#c0c0c0" stroke-width="2.4" stroke-linecap="round"/><path d="M993.8 112.5 L999.9 109.0" stroke="#c0c0c0" stroke-width="2.4" stroke-linecap="round"/></svg>
<svg style="left:0px;top:0px" width="10" height="10" viewBox="0 0 10 10"><rect x="1026" y="102" width="22" height="22" fill="none" stroke="#7c7c7c" stroke-width="2" stroke-dasharray="4 3"/><path d="M1048.7 116.8 L1050.9 113.4" stroke="#7c7c7c" stroke-width="1.6"/><path d="M1050.4 118.6 L1053.9 116.7" stroke="#7c7c7c" stroke-width="1.6"/><path d="M1051.0 121.0 L1055.0 121.0" stroke="#7c7c7c" stroke-width="1.6"/><path d="M1050.4 123.4 L1053.9 125.3" stroke="#7c7c7c" stroke-width="1.6"/><path d="M1048.7 125.2 L1050.9 128.6" stroke="#7c7c7c" stroke-width="1.6"/><path d="M1046.4 126.0 L1046.6 130.0" stroke="#7c7c7c" stroke-width="1.6"/><path d="M1043.9 125.5 L1042.3 129.2" stroke="#7c7c7c" stroke-width="1.6"/><path d="M1042.0 124.0 L1038.8 126.4" stroke="#7c7c7c" stroke-width="1.6"/></svg>
<svg style="left:0px;top:0px" width="10" height="10" viewBox="0 0 10 10"><path d="M1096 101 L1116 117 L1098 134 L1081 117 Z" fill="#c0c0c0"/><path d="M1089 112 H1103 L1096 105 Z" fill="#4e4e4e"/><path d="M1081 117 Q1077 128 1082 130 Q1086 128 1084 120 Z" fill="#c0c0c0"/></svg>
<svg style="left:0px;top:0px" width="10" height="10" viewBox="0 0 10 10"><rect x="1138" y="106" width="25" height="25" fill="none" stroke="#c0c0c0" stroke-width="2"/><circle cx="1138" cy="106" r="3" fill="#c0c0c0"/><circle cx="1163" cy="106" r="3" fill="#c0c0c0"/><circle cx="1138" cy="131" r="3" fill="#c0c0c0"/><circle cx="1163" cy="131" r="3" fill="#c0c0c0"/><circle cx="1150" cy="106" r="3" fill="#c0c0c0"/><circle cx="1150" cy="131" r="3" fill="#c0c0c0"/><circle cx="1138" cy="118" r="3" fill="#c0c0c0"/><circle cx="1163" cy="118" r="3" fill="#c0c0c0"/><circle cx="1150" cy="98" r="3" fill="#c0c0c0"/><path d="M1150 98 V106" stroke="#c0c0c0" stroke-width="2"/></svg>
<svg style="left:0px;top:0px" width="10" height="10" viewBox="0 0 10 10"><rect x="1207" y="102" width="28" height="28" fill="none" stroke="#7a7a7a" stroke-width="2" stroke-dasharray="4 3"/><path d="M1204 99 L1238 133" stroke="#7a7a7a" stroke-width="2"/></svg>
<svg style="left:0px;top:0px" width="10" height="10" viewBox="0 0 10 10"><rect x="1260" y="102" width="28" height="28" fill="none" stroke="#7a7a7a" stroke-width="2" stroke-dasharray="4 3"/><path d="M1260 130 L1290 100 V130 Z" fill="#7a7a7a"/></svg>
<svg style="left:0px;top:0px" width="10" height="10" viewBox="0 0 10 10"><rect x="1314" y="101" width="32" height="31" rx="4" fill="none" stroke="#7a7a7a" stroke-width="2"/><rect x="1319" y="106" width="22" height="21" fill="none" stroke="#7a7a7a" stroke-width="2" stroke-dasharray="3.5 2.5"/></svg>
<svg style="left:0px;top:0px" width="10" height="10" viewBox="0 0 10 10"><path d="M1386 132 V104 L1410 132 Z" fill="none" stroke="#c0c0c0" stroke-width="2.2"/><path d="M1397 120 L1414 102 Q1418 98 1420 102 L1403 121 Z" fill="#c0c0c0"/><path d="M1395 124 L1397 120 L1400 122 Z" fill="#c0c0c0"/></svg>
<svg style="left:0px;top:0px" width="10" height="10" viewBox="0 0 10 10"><path d="M1438 118 h35 a17 12 0 0 1 -35 0" fill="none" stroke="#c0c0c0" stroke-width="2.2"/><path d="M1452 117 L1469 100 Q1473 96 1476 100 L1458 119 Z" fill="#c0c0c0"/></svg>
<svg style="left:0px;top:0px" width="10" height="10" viewBox="0 0 10 10"><path d="M1493 104 V134 M1486 113 H1528 M1486 128 H1528 M1522 108 V134" stroke="#8e8e8e" stroke-width="1.4"/><path d="M1496 130 V115 H1510" fill="none" stroke="#c0c0c0" stroke-width="2.2"/><path d="M1506 117 L1522 100 Q1526 96 1529 100 L1512 118 Z" fill="#c0c0c0"/></svg>
<svg style="left:0px;top:0px" width="10" height="10" viewBox="0 0 10 10"><rect x="1567" y="97" width="26" height="40" rx="3" fill="none" stroke="#c0c0c0" stroke-width="2.2"/><rect x="1568" y="129" width="24" height="7" fill="#c0c0c0"/><rect x="1572" y="102" width="4" height="4" fill="#c0c0c0"/><rect x="1578" y="102" width="4" height="4" fill="#c0c0c0"/><rect x="1584" y="102" width="4" height="4" fill="#c0c0c0"/><rect x="1572" y="108" width="4" height="4" fill="#c0c0c0"/><rect x="1578" y="108" width="4" height="4" fill="#c0c0c0"/><rect x="1572" y="114" width="4" height="4" fill="#c0c0c0"/><rect x="1578" y="114" width="4" height="4" fill="#c0c0c0"/><rect x="1584" y="114" width="4" height="4" fill="#c0c0c0"/><rect x="1572" y="120" width="4" height="4" fill="#c0c0c0"/></svg>
<svg style="left:0px;top:0px" width="10" height="10" viewBox="0 0 10 10"><path d="M1631 109 L1646 124 L1661 109" fill="none" stroke="#c0c0c0" stroke-width="3.2" stroke-linecap="round"/></svg>
<div class="ab" style="left:395px;top:151px;width:394px;height:35px;background:#636985;"></div>
<svg style="left:0px;top:0px" width="10" height="10" viewBox="0 0 10 10"><circle cx="413" cy="168" r="5" fill="#b9bccb"/></svg>
<div class="t" style="left:431px;top:157px;font-size:22px;color:#e3e3e6;letter-spacing:-0.1px">otp* (1800 x 2690px 300dpi 73.9%)</div>
<svg style="left:0px;top:0px" width="10" height="10" viewBox="0 0 10 10"><path d="M1634 161 L1645 172 L1656 161" fill="none" stroke="#c0c0c0" stroke-width="2.6" stroke-linecap="round"/></svg>
<div class="ab" style="left:397px;top:187px;width:1273px;height:1311px;background:#ffffff;"></div>
<div class="ab" style="left:397px;top:1497px;width:1273px;height:3px;background:#2a2a2a;"></div>
<svg style="left:0;top:0" width="2000" height="1500" viewBox="0 0 2000 1500"><g fill="none" stroke="#141414" stroke-width="2" stroke-linecap="round" stroke-linejoin="round" vector-effect="non-scaling-stroke"><g transform="translate(590 320) scale(0.13333)"><path vector-effect="non-scaling-stroke" d="M850,1230 C840,1350 860,1400 920,1440"/><path vector-effect="non-scaling-stroke" d="M900,1230 C940,1320 980,1410 1000,1500"/><path vector-effect="non-scaling-stroke" d="M960,1180 C1020,1260 1080,1330 1200,1420"/><path vector-effect="non-scaling-stroke" d="M1110,1330 C1200,1330 1300,1350 1350,1400 C1370,1440 1380,1480 1390,1500"/><path vector-effect="non-scaling-stroke" d="M100,1480 C200,1440 280,1400 340,1380"/><path vector-effect="non-scaling-stroke" d="M470,1120 C440,1250 430,1400 460,1500"/><path vector-effect="non-scaling-stroke" d="M520,1080 C530,1200 540,1350 520,1500"/><path vector-effect="non-scaling-stroke" d="M1030,1140 C1060,1200 1090,1260 1110,1290"/></g><g transform="translate(600 320) scale(0.10667)"><path vector-effect="non-scaling-stroke" d="M770,235 C700,200 620,200 535,245 C560,270 590,290 620,300 C520,330 420,360 330,430 C290,470 260,540 250,620"/><path vector-effect="non-scaling-stroke" d="M410,530 C350,620 300,700 250,760 C200,810 150,860 90,910 L190,920 C150,950 120,970 90,990 L210,1010"/><path vector-effect="non-scaling-stroke" d="M185,735 L240,760"/><path vector-effect="non-scaling-stroke" d="M830,215 C870,160 950,120 1110,110 L990,215 C1100,210 1200,250 1280,300 C1350,350 1420,420 1460,500"/><path vector-effect="non-scaling-stroke" d="M930,300 C960,260 1000,240 1060,230"/><path vector-effect="non-scaling-stroke" d="M340,910 C300,970 260,1030 230,1080 L360,1120"/><path vector-effect="non-scaling-stroke" d="M560,580 C500,650 460,760 460,900 C470,1000 500,1080 540,1130"/><path vector-effect="non-scaling-stroke" d="M470,960 C420,920 370,940 380,1020 C390,1100 440,1150 530,1160"/><path vector-effect="non-scaling-stroke" d="M1440,520 C1520,650 1590,800 1600,900 L1600,1070 L1540,900 C1520,1000 1460,1080 1420,1130 L1580,1105 L1500,1080"/><path vector-effect="non-scaling-stroke" d="M660,950 C720,850 780,760 830,690 C860,800 890,900 910,1000"/><path vector-effect="non-scaling-stroke" d="M940,740 L930,980"/><path vector-effect="non-scaling-stroke" d="M1140,660 C1100,850 1050,1000 870,1160"/><path vector-effect="non-scaling-stroke" d="M1140,660 C1180,780 1230,870 1280,950 L1210,1180 C1280,1130 1340,1080 1380,1000 L1400,770"/><path vector-effect="non-scaling-stroke" d="M630,880 C700,860 800,840 880,835"/><path vector-effect="non-scaling-stroke" d="M1160,810 C1230,815 1300,820 1370,825"/><path vector-effect="non-scaling-stroke" d="M640,1000 C700,970 780,960 880,1000"/><path vector-effect="non-scaling-stroke" d="M1100,960 C1180,940 1240,940 1290,945"/><path vector-effect="non-scaling-stroke" d="M770,1030 C740,1060 750,1110 780,1100 C810,1090 820,1040 800,1020"/><path vector-effect="non-scaling-stroke" d="M1160,1000 C1140,1030 1150,1060 1170,1055 C1190,1040 1190,1000 1170,995"/><path vector-effect="non-scaling-stroke" d="M860,1350 C930,1330 1000,1320 1080,1305 C1040,1350 1000,1380 960,1385 C920,1380 880,1360 860,1350"/><path vector-effect="non-scaling-stroke" d="M560,1260 C640,1330 720,1400 810,1470 C870,1510 930,1520 960,1530 C1020,1500 1060,1470 1100,1440"/><path vector-effect="non-scaling-stroke" d="M1100,1440 C1150,1380 1220,1340 1310,1320 L1290,1280 C1280,1230 1270,1180 1290,1150"/><path vector-effect="non-scaling-stroke" d="M540,1130 L600,1500 L630,1750"/><path vector-effect="non-scaling-stroke" d="M460,1250 C420,1320 360,1400 260,1500 C220,1580 190,1640 180,1690"/><path vector-effect="non-scaling-stroke" d="M370,1370 L530,1380 C490,1420 460,1500 420,1650"/><path vector-effect="non-scaling-stroke" d="M330,1220 L420,1190"/><path vector-effect="non-scaling-stroke" d="M720,500 C780,450 830,420 860,410 L850,440 C800,470 760,490 720,500"/><path vector-effect="non-scaling-stroke" d="M990,430 L1030,400"/><path vector-effect="non-scaling-stroke" d="M1230,340 C1280,370 1320,400 1350,450"/><path vector-effect="non-scaling-stroke" d="M1070,460 C1130,500 1200,600 1250,780"/><path vector-effect="non-scaling-stroke" d="M550,1090 C600,1140 650,1180 720,1220 L760,1250"/><path vector-effect="non-scaling-stroke" d="M620,1150 L660,1210"/></g><g transform="translate(480 250) scale(0.26667)"><path vector-effect="non-scaling-stroke" d="M585,165 L610,80 L640,160"/><path vector-effect="non-scaling-stroke" d="M595,130 L630,125"/><path vector-effect="non-scaling-stroke" d="M655,115 C640,120 640,160 660,160 C680,160 685,120 655,115"/><path vector-effect="non-scaling-stroke" d="M705,75 L700,160"/><path vector-effect="non-scaling-stroke" d="M703,130 C730,110 760,140 705,158"/><path vector-effect="non-scaling-stroke" d="M795,120 C760,115 755,160 785,155 C800,150 800,125 795,120 L805,155 L830,160"/></g><g transform="translate(490 500) scale(0.26667)"><path vector-effect="non-scaling-stroke" d="M520,20 L440,70 C350,150 260,250 210,345 C160,450 120,600 105,770 L80,770 C60,900 50,1000 80,1100 C100,1250 120,1350 140,1380 L270,1360 L320,1440 L470,1240 L430,1110"/><path vector-effect="non-scaling-stroke" d="M205,370 C260,470 300,560 300,660 L295,1020"/><path vector-effect="non-scaling-stroke" d="M130,1050 L220,985 L430,1120"/><path vector-effect="non-scaling-stroke" d="M440,70 C390,200 350,320 345,440"/><path vector-effect="non-scaling-stroke" d="M390,440 L575,325 C560,260 520,200 515,130 C520,80 540,30 550,0"/><path vector-effect="non-scaling-stroke" d="M620,250 L610,550 C610,800 640,1100 700,1500"/><path vector-effect="non-scaling-stroke" d="M850,480 C860,700 870,1000 880,1200 C870,1350 860,1450 870,1500"/><path vector-effect="non-scaling-stroke" d="M900,10 L1040,20 C1100,150 1150,250 1170,420 C1100,380 1030,340 950,315 L880,330"/><path vector-effect="non-scaling-stroke" d="M1040,20 C1150,130 1230,200 1270,300"/><path vector-effect="non-scaling-stroke" d="M1030,1120 L1040,1270 L1200,1470"/><path vector-effect="non-scaling-stroke" d="M1030,1120 C1100,1200 1170,1280 1230,1340"/><path vector-effect="non-scaling-stroke" d="M620,160 L740,185 L880,120"/><path vector-effect="non-scaling-stroke" d="M640,240 C700,250 780,240 850,190"/><path vector-effect="non-scaling-stroke" d="M680,300 C720,380 760,440 770,470 C800,400 850,330 880,240"/><path vector-effect="non-scaling-stroke" d="M760,470 C750,520 770,540 780,520 C790,490 780,470 760,470"/><path vector-effect="non-scaling-stroke" d="M560,390 C530,450 515,520 510,610"/><path vector-effect="non-scaling-stroke" d="M520,620 L545,615 L548,655 L525,655 Z"/><path vector-effect="non-scaling-stroke" d="M580,1280 C530,1320 510,1350 530,1370 C570,1360 590,1310 580,1280"/><path vector-effect="non-scaling-stroke" d="M900,1250 C930,1280 970,1330 980,1360 C940,1340 900,1300 900,1250"/><path vector-effect="non-scaling-stroke" d="M640,1090 L880,1085"/><path vector-effect="non-scaling-stroke" d="M660,1170 L880,1160"/><path vector-effect="non-scaling-stroke" d="M700,1090 L710,1190 L820,1190 L810,1100 Z"/><path vector-effect="non-scaling-stroke" d="M690,1140 L730,1140"/><path vector-effect="non-scaling-stroke" d="M580,0 C560,100 540,200 520,250"/></g><g transform="translate(600 640) scale(0.14999)"><path vector-effect="non-scaling-stroke" d="M350,610 C450,500 600,330 800,120"/><path vector-effect="non-scaling-stroke" d="M470,560 C560,510 620,460 700,370 C750,290 790,200 800,140"/><path vector-effect="non-scaling-stroke" d="M420,560 L510,760 L570,780 C650,700 750,600 830,470"/><path vector-effect="non-scaling-stroke" d="M630,510 L740,390 L760,430 L660,550 Z"/><path vector-effect="non-scaling-stroke" d="M620,420 L690,350"/><path vector-effect="non-scaling-stroke" d="M700,500 L770,560"/><path vector-effect="non-scaling-stroke" d="M400,790 L500,750"/><path vector-effect="non-scaling-stroke" d="M180,540 C190,470 260,390 310,380 C310,450 270,550 210,560 Z"/><path vector-effect="non-scaling-stroke" d="M220,520 C240,470 270,440 300,420"/><path vector-effect="non-scaling-stroke" d="M160,1000 C180,930 240,850 290,800 C300,880 270,960 210,990 Z"/><path vector-effect="non-scaling-stroke" d="M210,950 C230,900 260,860 290,840"/><path vector-effect="non-scaling-stroke" d="M900,350 L960,340 C1010,420 1050,490 1070,560 C1000,520 920,440 900,350"/><path vector-effect="non-scaling-stroke" d="M870,820 L920,810 C980,840 1030,880 1050,930 C970,930 900,900 880,870 Z"/><path vector-effect="non-scaling-stroke" d="M890,0 L900,150 L880,160 L900,250 L915,200 L910,0"/></g><g transform="translate(490 880) scale(0.26667)"><path vector-effect="non-scaling-stroke" d="M330,40 C330,120 340,180 360,220 L400,350 L430,360 C540,300 640,240 720,190 L700,60 C640,60 580,100 400,220"/><path vector-effect="non-scaling-stroke" d="M860,70 L870,210 L1110,340 L1140,330 C1160,260 1180,230 1190,210 L1250,130 L1250,0"/><path vector-effect="non-scaling-stroke" d="M880,60 L1180,215"/><path vector-effect="non-scaling-stroke" d="M1150,0 L1250,120"/><path vector-effect="non-scaling-stroke" d="M745,60 L750,500 L820,90 Z"/><path vector-effect="non-scaling-stroke" d="M440,380 C460,600 480,800 485,900 C480,1100 490,1300 500,1500"/><path vector-effect="non-scaling-stroke" d="M1080,330 C1040,500 1000,600 960,720 C950,760 940,800 930,820 C910,850 890,900 880,900 L785,1100 C770,1150 790,1200 800,1250 C810,1350 850,1420 850,1500"/><path vector-effect="non-scaling-stroke" d="M760,850 C820,850 880,850 910,840"/><path vector-effect="non-scaling-stroke" d="M755,900 C750,1100 740,1300 720,1500"/></g><g transform="translate(490 1180) scale(0.21333)"><path vector-effect="non-scaling-stroke" d="M600,0 C600,300 640,600 640,900 L615,1010 L630,1045"/><path vector-effect="non-scaling-stroke" d="M940,0 C940,200 920,350 900,500 L880,680"/><path vector-effect="non-scaling-stroke" d="M905,655 C890,800 880,950 910,1120 L860,1275"/><path vector-effect="non-scaling-stroke" d="M1000,80 C1000,200 1040,300 1060,400 L1040,580 L910,490"/><path vector-effect="non-scaling-stroke" d="M630,1040 C660,990 720,980 780,1000 C850,1030 890,1070 890,1110"/><path vector-effect="non-scaling-stroke" d="M700,995 C680,1050 620,1080 470,1150 L430,1180 L435,1265 C550,1280 650,1285 780,1265 L795,1220 L800,1265 L860,1275"/><path vector-effect="non-scaling-stroke" d="M400,1225 L450,1165"/></g><g transform="translate(760 560) scale(0.22676)"><path vector-effect="non-scaling-stroke" d="M240,0 L300,100 L410,330 L450,540"/><path vector-effect="non-scaling-stroke" d="M300,110 C250,250 200,400 185,560 L180,620 C200,800 240,1000 250,1300 L270,1500"/><path vector-effect="non-scaling-stroke" d="M250,1110 L390,1250 L500,1200 C530,1050 560,900 570,720"/><path vector-effect="non-scaling-stroke" d="M400,900 C470,880 520,870 560,820"/><path vector-effect="non-scaling-stroke" d="M410,600 C440,580 500,570 540,590 L570,720 L560,780 L490,790 L440,720 L400,700 Z"/><path vector-effect="non-scaling-stroke" d="M460,690 L530,620 M480,760 L560,700"/><path vector-effect="non-scaling-stroke" d="M390,700 C400,800 420,950 430,1100 L510,960 L560,820"/><path vector-effect="non-scaling-stroke" d="M240,800 C280,700 330,650 400,620"/><path vector-effect="non-scaling-stroke" d="M260,1100 C270,900 280,750 300,700"/><path vector-effect="non-scaling-stroke" d="M440,570 C500,470 560,420 590,380"/><path vector-effect="non-scaling-stroke" d="M490,580 C560,480 650,430 730,430"/><path vector-effect="non-scaling-stroke" d="M480,60 C520,200 540,350 520,450"/><path vector-effect="non-scaling-stroke" d="M520,60 C620,80 700,200 760,400 L770,520"/><path vector-effect="non-scaling-stroke" d="M560,180 L580,400 M600,120 L640,400 M660,150 L700,420"/><path vector-effect="non-scaling-stroke" d="M270,1340 L290,1500"/></g><g transform="translate(900 260) scale(0.05999)"><path vector-effect="non-scaling-stroke" d="M360,240 C370,380 390,500 410,640"/><path vector-effect="non-scaling-stroke" d="M510,380 C470,420 430,460 420,500 C500,530 600,560 720,550"/><path vector-effect="non-scaling-stroke" d="M720,540 C700,480 720,420 800,360 C860,350 860,480 780,510 C740,520 720,460 740,430"/><path vector-effect="non-scaling-stroke" d="M960,510 L940,340 C1000,320 1050,330 1080,360 C1110,420 1130,480 1160,490 C1200,480 1240,400 1250,330"/><path vector-effect="non-scaling-stroke" d="M1250,330 C1320,340 1340,440 1300,490 C1260,500 1250,420 1260,380"/><path vector-effect="non-scaling-stroke" d="M1430,420 C1500,380 1580,360 1560,310 C1500,280 1430,330 1420,400 C1420,470 1480,490 1550,460 L1690,425"/></g><g transform="translate(840 250) scale(0.26667)"></g><g transform="translate(880 330) scale(0.11331)"><path vector-effect="non-scaling-stroke" d="M490,290 L260,195 C250,280 280,370 340,450"/><path vector-effect="non-scaling-stroke" d="M270,220 C290,300 320,360 350,420"/><path vector-effect="non-scaling-stroke" d="M340,450 C390,330 480,250 600,160 C720,90 850,70 950,100 C1000,120 1040,150 1060,180"/><path vector-effect="non-scaling-stroke" d="M1070,180 C1110,170 1150,190 1200,220 L1320,145 C1360,220 1380,320 1370,420 C1360,480 1340,520 1300,550"/><path vector-effect="non-scaling-stroke" d="M1140,250 L1260,190 L1230,260"/><path vector-effect="non-scaling-stroke" d="M730,300 C760,240 820,240 870,320"/><path vector-effect="non-scaling-stroke" d="M340,450 C300,540 290,620 280,720 C260,850 220,950 130,1060 C220,1030 290,990 340,940"/><path vector-effect="non-scaling-stroke" d="M350,790 C340,900 350,1050 370,1150 L300,1260 L360,1210"/><path vector-effect="non-scaling-stroke" d="M410,580 C410,700 420,800 440,880 C450,950 460,1050 430,1100 L500,1210"/><path vector-effect="non-scaling-stroke" d="M540,510 C560,650 600,780 620,850 C650,900 690,960 760,1000"/><path vector-effect="non-scaling-stroke" d="M720,515 C760,600 800,700 840,800 L910,1000 C850,960 760,900 700,850"/><path vector-effect="non-scaling-stroke" d="M730,530 C820,620 920,700 1050,830"/><path vector-effect="non-scaling-stroke" d="M850,670 C950,650 1030,690 1080,715"/><path vector-effect="non-scaling-stroke" d="M1050,630 C1060,750 1070,900 1050,1000 L1000,1120 C1050,1060 1090,1000 1110,960"/><path vector-effect="non-scaling-stroke" d="M1240,730 C1240,850 1230,1000 1200,1080 C1170,1160 1110,1200 1010,1420"/><path vector-effect="non-scaling-stroke" d="M450,880 C470,1000 520,1080 570,1180 C650,1250 750,1320 810,1350 C900,1320 1000,1260 1100,1200"/><path vector-effect="non-scaling-stroke" d="M470,730 C520,690 570,690 600,700"/><path vector-effect="non-scaling-stroke" d="M460,850 C520,830 580,840 620,870"/><path vector-effect="non-scaling-stroke" d="M550,880 C540,940 580,970 620,960 C630,920 600,880 550,880"/><path vector-effect="non-scaling-stroke" d="M870,800 C950,790 1030,810 1090,850"/><path vector-effect="non-scaling-stroke" d="M930,870 C920,920 950,960 980,950 C1000,920 990,880 960,870"/><path vector-effect="non-scaling-stroke" d="M700,1150 C760,1150 830,1160 880,1160 L895,1140 C900,1200 860,1250 810,1250 C760,1240 730,1200 720,1180"/><path vector-effect="non-scaling-stroke" d="M1130,230 C1180,350 1230,500 1240,650 L1240,730"/><path vector-effect="non-scaling-stroke" d="M1250,420 C1320,450 1400,430 1440,520 C1470,700 1500,900 1560,1000 L1620,1100 C1560,1060 1520,1020 1490,990 C1460,1060 1430,1150 1400,1250 C1380,1300 1380,1350 1400,1420"/><path vector-effect="non-scaling-stroke" d="M1270,500 C1330,600 1350,700 1350,800 L1370,820 L1360,1130 L1310,960 L1300,1180"/><path vector-effect="non-scaling-stroke" d="M870,1360 L880,1460"/><path vector-effect="non-scaling-stroke" d="M1190,1180 C1200,1260 1220,1350 1240,1430"/></g><g transform="translate(850 470) scale(0.15504)"><path vector-effect="non-scaling-stroke" d="M460,235 C550,220 650,210 790,210 L1090,130 L1110,210"/><path vector-effect="non-scaling-stroke" d="M1130,180 C1250,150 1350,120 1450,120 L1500,125"/><path vector-effect="non-scaling-stroke" d="M460,240 L420,250 C370,290 320,340 285,390 C290,420 320,440 350,460 C450,540 600,640 720,710 C760,720 790,725 810,725"/><path vector-effect="non-scaling-stroke" d="M480,240 C600,320 700,390 790,450 C820,480 840,500 860,540"/><path vector-effect="non-scaling-stroke" d="M1500,125 C1550,200 1590,250 1610,310 C1590,370 1520,430 1440,490 C1330,560 1230,620 1130,690"/><path vector-effect="non-scaling-stroke" d="M1080,480 C1200,400 1300,300 1450,170 C1460,150 1480,135 1500,125"/><path vector-effect="non-scaling-stroke" d="M360,440 L495,320"/><path vector-effect="non-scaling-stroke" d="M450,515 L605,370"/><path vector-effect="non-scaling-stroke" d="M590,625 L690,410"/><path vector-effect="non-scaling-stroke" d="M720,700 L775,510"/><path vector-effect="non-scaling-stroke" d="M1220,605 L1185,445"/><path vector-effect="non-scaling-stroke" d="M1350,565 L1280,360"/><path vector-effect="non-scaling-stroke" d="M1480,440 L1370,290"/><path vector-effect="non-scaling-stroke" d="M1540,315 L1450,200"/><path vector-effect="non-scaling-stroke" d="M680,260 C700,320 740,380 790,440 L830,490 C860,520 880,550 900,550 L950,520 L1020,510 C1060,490 1080,460 1100,420 C1120,380 1160,330 1180,280 C1190,250 1200,230 1190,210"/><path vector-effect="non-scaling-stroke" d="M285,430 L120,670 L160,839"/><path vector-effect="non-scaling-stroke" d="M175,665 C260,660 330,720 400,839"/><path vector-effect="non-scaling-stroke" d="M1620,340 C1680,420 1760,470 1790,560 L1820,839"/><path vector-effect="non-scaling-stroke" d="M1760,565 C1680,640 1620,720 1560,839"/><path vector-effect="non-scaling-stroke" d="M540,190 L560,100 L590,150 L600,70 L640,200"/><path vector-effect="non-scaling-stroke" d="M830,100 L835,200"/><path vector-effect="non-scaling-stroke" d="M1230,0 C1200,50 1190,100 1200,150 L1250,190"/><path vector-effect="non-scaling-stroke" d="M835,650 C860,700 900,780 950,839"/><path vector-effect="non-scaling-stroke" d="M820,600 L825,839"/><path vector-effect="non-scaling-stroke" d="M1090,500 L1120,700 L1110,839"/></g><g transform="translate(850 520) scale(0.15504)"><path vector-effect="non-scaling-stroke" d="M120,350 C150,450 180,550 190,600 C170,700 160,800 150,900"/><path vector-effect="non-scaling-stroke" d="M175,345 C260,350 330,400 380,500 C440,620 500,760 550,1020"/><path vector-effect="non-scaling-stroke" d="M240,520 L300,850"/><path vector-effect="non-scaling-stroke" d="M290,420 L340,820"/><path vector-effect="non-scaling-stroke" d="M350,600 L400,870"/><path vector-effect="non-scaling-stroke" d="M430,660 L470,880"/><path vector-effect="non-scaling-stroke" d="M200,560 L230,870"/><path vector-effect="non-scaling-stroke" d="M1780,230 C1800,400 1850,600 1880,800 C1900,900 1910,1000 1910,1100"/><path vector-effect="non-scaling-stroke" d="M1780,240 C1680,320 1600,420 1520,560 C1450,700 1400,850 1360,950"/><path vector-effect="non-scaling-stroke" d="M1740,290 L1660,600"/><path vector-effect="non-scaling-stroke" d="M1690,380 L1600,660"/><path vector-effect="non-scaling-stroke" d="M1770,460 L1720,740"/><path vector-effect="non-scaling-stroke" d="M1620,500 L1540,700"/><path vector-effect="non-scaling-stroke" d="M1510,720 C1600,700 1750,760 1850,880"/><path vector-effect="non-scaling-stroke" d="M810,420 C820,550 840,700 900,800 C940,860 980,880 1000,900"/><path vector-effect="non-scaling-stroke" d="M830,340 C880,420 940,500 990,540 C1040,500 1080,450 1110,380"/><path vector-effect="non-scaling-stroke" d="M1120,370 C1140,450 1160,550 1160,620 C1120,700 1080,760 1020,860"/><path vector-effect="non-scaling-stroke" d="M1000,560 L1010,690"/><path vector-effect="non-scaling-stroke" d="M990,580 C1020,580 1050,600 1040,620 C1020,630 1000,640 1000,650"/><path vector-effect="non-scaling-stroke" d="M975,700 L1010,670 L1020,690 Z"/><path vector-effect="non-scaling-stroke" d="M1230,690 L1300,550 L1390,590 L1420,760 L1360,800 L1280,780 Z"/><path vector-effect="non-scaling-stroke" d="M1300,610 C1250,650 1250,760 1320,790 C1400,780 1420,720 1370,630 C1340,600 1320,600 1300,610"/><path vector-effect="non-scaling-stroke" d="M660,665 C720,670 760,710 750,780 C740,850 760,900 850,910"/><path vector-effect="non-scaling-stroke" d="M650,760 C680,850 700,900 760,910"/></g><g transform="translate(840 600) scale(0.26667)"><path vector-effect="non-scaling-stroke" d="M370,800 L310,870 L300,1500"/><path vector-effect="non-scaling-stroke" d="M450,810 L410,940 L400,1500"/><path vector-effect="non-scaling-stroke" d="M870,820 C910,1000 940,1200 940,1500"/><path vector-effect="non-scaling-stroke" d="M1000,770 L1040,830 L1090,1500"/><path vector-effect="non-scaling-stroke" d="M660,1020 L660,1500"/><path vector-effect="non-scaling-stroke" d="M630,1040 L750,910"/><path vector-effect="non-scaling-stroke" d="M640,970 L715,890"/><path vector-effect="non-scaling-stroke" d="M1060,880 C1110,890 1150,860 1170,800 C1190,700 1180,600 1200,520 C1220,420 1260,350 1330,330 C1420,330 1460,420 1430,500 C1390,530 1350,510 1350,480 C1360,430 1330,380 1300,400"/><path vector-effect="non-scaling-stroke" d="M1060,990 C1150,1010 1220,960 1260,880 C1280,780 1280,700 1270,600 C1290,520 1310,470 1350,470"/><path vector-effect="non-scaling-stroke" d="M1220,520 L1320,400 M1230,560 L1360,420 M1260,620 L1400,420"/><path vector-effect="non-scaling-stroke" d="M0,40 L50,120 L80,280 L30,360"/><path vector-effect="non-scaling-stroke" d="M20,460 L30,620 L60,780 L120,600 L180,540"/><path vector-effect="non-scaling-stroke" d="M0,900 L20,915 L120,870 L160,700 L180,540"/></g><g transform="translate(880 650) scale(0.14000)"><path vector-effect="non-scaling-stroke" d="M0,200 C80,120 180,70 290,50 C330,45 350,30 350,0"/><path vector-effect="non-scaling-stroke" d="M200,115 L410,210"/><path vector-effect="non-scaling-stroke" d="M395,230 C440,280 480,330 510,370"/><path vector-effect="non-scaling-stroke" d="M80,770 C150,850 250,930 280,970 C330,960 400,920 460,880"/><path vector-effect="non-scaling-stroke" d="M290,370 C240,420 200,500 180,600 C170,680 190,760 260,810 C320,840 400,860 470,850 C540,830 600,760 640,600"/><path vector-effect="non-scaling-stroke" d="M290,370 L470,380"/><path vector-effect="non-scaling-stroke" d="M270,420 L430,430"/><path vector-effect="non-scaling-stroke" d="M215,550 L440,505"/><path vector-effect="non-scaling-stroke" d="M215,700 L440,590"/><path vector-effect="non-scaling-stroke" d="M370,830 L480,680"/><path vector-effect="non-scaling-stroke" d="M490,370 C540,320 600,260 680,250 L780,300"/><path vector-effect="non-scaling-stroke" d="M460,440 C440,520 450,600 490,640 C530,670 600,660 650,590 L760,500 C790,480 780,450 740,460 L680,460"/><path vector-effect="non-scaling-stroke" d="M610,405 L780,360"/><path vector-effect="non-scaling-stroke" d="M700,350 C730,340 780,340 800,360"/><path vector-effect="non-scaling-stroke" d="M620,320 L780,310"/><path vector-effect="non-scaling-stroke" d="M720,540 L780,700 C850,660 950,650 1040,660 L1030,560"/><path vector-effect="non-scaling-stroke" d="M650,150 L680,140 L720,180 L650,230 L620,160 Z"/><path vector-effect="non-scaling-stroke" d="M680,190 C800,140 900,120 1010,130 L1050,150 L1030,190"/><path vector-effect="non-scaling-stroke" d="M520,160 L620,180"/><path vector-effect="non-scaling-stroke" d="M880,310 C940,270 1000,230 1070,210 C1130,200 1180,240 1200,280 L1220,400 C1230,480 1230,550 1210,600 L1170,600 C1090,570 1000,530 940,500 C930,480 950,470 980,480"/><path vector-effect="non-scaling-stroke" d="M880,350 L940,340"/><path vector-effect="non-scaling-stroke" d="M900,420 L950,400"/><path vector-effect="non-scaling-stroke" d="M930,440 L980,440"/><path vector-effect="non-scaling-stroke" d="M950,300 C1000,300 1080,320 1160,370"/><path vector-effect="non-scaling-stroke" d="M980,470 L1150,470"/><path vector-effect="non-scaling-stroke" d="M1200,280 L1300,270 C1400,290 1460,300 1490,330 C1510,400 1510,500 1500,600 C1450,680 1350,730 1200,700 C1170,680 1150,640 1150,620"/><path vector-effect="non-scaling-stroke" d="M1230,350 C1300,360 1380,390 1470,420"/><path vector-effect="non-scaling-stroke" d="M1240,460 C1300,500 1390,540 1480,560"/><path vector-effect="non-scaling-stroke" d="M1250,570 C1300,600 1350,630 1420,660"/><path vector-effect="non-scaling-stroke" d="M1260,270 C1270,200 1280,160 1320,110 C1400,90 1480,80 1590,80"/><path vector-effect="non-scaling-stroke" d="M1880,0 C1900,100 1910,200 1910,400 C1900,550 1850,680 1750,760 C1650,810 1550,830 1480,820 C1400,800 1330,760 1290,730"/><path vector-effect="non-scaling-stroke" d="M160,930 L170,1080 C200,1130 400,1160 600,1170 L800,1170 C870,1160 910,1130 920,1050 L950,1040 C960,1100 1000,1140 1060,1160 C1200,1160 1400,1130 1560,1100 C1650,1060 1720,1010 1740,950 C1740,900 1720,860 1700,840"/><path vector-effect="non-scaling-stroke" d="M560,820 C800,810 1000,790 1300,740"/><path vector-effect="non-scaling-stroke" d="M300,980 L300,1130"/><path vector-effect="non-scaling-stroke" d="M450,940 L460,1160"/><path vector-effect="non-scaling-stroke" d="M670,850 L700,1070"/><path vector-effect="non-scaling-stroke" d="M810,860 L830,1180"/><path vector-effect="non-scaling-stroke" d="M920,710 L930,1030"/><path vector-effect="non-scaling-stroke" d="M1120,820 C1150,900 1180,1000 1190,1150"/><path vector-effect="non-scaling-stroke" d="M1420,860 C1450,950 1470,1050 1480,1120"/><path vector-effect="non-scaling-stroke" d="M1690,810 L1700,900"/><path vector-effect="non-scaling-stroke" d="M1620,1080 C1660,1150 1690,1220 1700,1286"/></g><g transform="translate(840 980) scale(0.30675)"><path vector-effect="non-scaling-stroke" d="M265,0 C265,150 270,250 300,300 L340,370 L370,690 L450,750 L540,940"/><path vector-effect="non-scaling-stroke" d="M570,0 C560,300 550,600 545,940 L660,1030 C700,1060 730,1080 760,1075 L840,1010 L990,860 L990,610"/><path vector-effect="non-scaling-stroke" d="M940,0 L960,80 C970,250 970,450 980,610"/><path vector-effect="non-scaling-stroke" d="M815,0 C810,400 800,800 795,1030"/><path vector-effect="non-scaling-stroke" d="M330,0 C320,200 300,300 310,340"/><path vector-effect="non-scaling-stroke" d="M330,290 C400,420 440,550 470,690"/><path vector-effect="non-scaling-stroke" d="M470,890 C440,950 420,1000 410,1100 C410,1150 420,1190 490,1230 C570,1250 620,1200 660,1060 C620,1000 580,970 520,970 C470,980 440,1010 420,1080"/><path vector-effect="non-scaling-stroke" d="M420,1180 C500,1200 580,1180 630,1040"/><path vector-effect="non-scaling-stroke" d="M460,760 L540,830 M470,820 L560,760 M480,860 L540,800 M490,880 L530,860 M450,780 L570,690"/><path vector-effect="non-scaling-stroke" d="M660,1060 C640,1200 620,1300 610,1420 C650,1430 750,1420 850,1400 C950,1400 1020,1350 1060,1240 C1080,1150 1050,1100 990,1100 C900,1090 820,1150 780,1220 L760,1380"/><path vector-effect="non-scaling-stroke" d="M840,1010 L780,1160"/><path vector-effect="non-scaling-stroke" d="M740,1100 L810,1140 M750,1160 L830,1060 M760,1180 L810,1130"/><path vector-effect="non-scaling-stroke" d="M730,1340 C800,1250 880,1160 970,1100"/><path vector-effect="non-scaling-stroke" d="M610,1390 C700,1380 780,1380 860,1400"/><path vector-effect="non-scaling-stroke" d="M650,1060 L650,1230 L720,1270"/></g><g transform="translate(1320 270) scale(0.05000)"><path vector-effect="non-scaling-stroke" d="M270,350 C340,440 420,520 510,600"/><path vector-effect="non-scaling-stroke" d="M620,330 C560,500 480,700 450,910"/><path vector-effect="non-scaling-stroke" d="M790,520 C700,560 700,760 780,760 C870,740 900,600 880,540 C860,510 800,520 790,520"/><path vector-effect="non-scaling-stroke" d="M1070,490 C1040,560 1020,700 1080,740 C1150,760 1220,650 1250,520 C1250,600 1290,640 1440,590"/><path vector-effect="non-scaling-stroke" d="M1470,380 C1520,450 1550,700 1540,940 L1460,900"/><path vector-effect="non-scaling-stroke" d="M1710,280 L1715,290"/><path vector-effect="non-scaling-stroke" d="M1680,420 C1690,520 1700,600 1720,680"/></g><g transform="translate(1220 260) scale(0.28000)"><path vector-effect="non-scaling-stroke" d="M460,400 C500,360 540,340 580,330 C590,320 620,300 665,300 L635,320 C700,300 780,320 830,370 C880,420 910,470 930,530 L900,490 C910,550 900,650 860,720 L900,680 C880,740 860,780 840,820 L860,760 C840,800 810,830 780,850 C800,810 810,780 800,750"/><path vector-effect="non-scaling-stroke" d="M520,340 C480,390 440,450 420,520 C400,560 410,600 415,620 L440,570 C460,650 480,700 500,750 L490,700"/><path vector-effect="non-scaling-stroke" d="M470,520 C500,600 520,680 540,740"/><path vector-effect="non-scaling-stroke" d="M520,640 C530,720 560,790 650,850 C700,830 730,810 760,790"/><path vector-effect="non-scaling-stroke" d="M540,800 C560,830 570,850 550,870 L590,850 L600,870"/><path vector-effect="non-scaling-stroke" d="M575,470 C560,540 540,600 520,650"/><path vector-effect="non-scaling-stroke" d="M570,480 C620,560 660,600 690,630"/><path vector-effect="non-scaling-stroke" d="M650,520 C680,560 700,610 720,630"/><path vector-effect="non-scaling-stroke" d="M690,520 C730,515 760,520 780,530"/><path vector-effect="non-scaling-stroke" d="M760,560 C790,600 800,650 790,700"/><path vector-effect="non-scaling-stroke" d="M830,520 C850,600 850,680 800,760"/><path vector-effect="non-scaling-stroke" d="M500,560 C530,540 570,540 590,550"/><path vector-effect="non-scaling-stroke" d="M565,640 C560,660 570,670 580,660 C585,640 575,630 565,640"/><path vector-effect="non-scaling-stroke" d="M710,610 C740,600 770,610 790,620"/><path vector-effect="non-scaling-stroke" d="M720,630 C715,650 725,665 735,655 C740,635 730,625 720,630"/><path vector-effect="non-scaling-stroke" d="M640,770 C655,770 655,780 645,780"/><path vector-effect="non-scaling-stroke" d="M630,850 L620,910 M710,830 L720,920"/><path vector-effect="non-scaling-stroke" d="M675,1286 L720,1460 L756,1286"/><path vector-effect="non-scaling-stroke" d="M682,1286 L700,1400"/><path vector-effect="non-scaling-stroke" d="M230,1250 L160,1500"/><path vector-effect="non-scaling-stroke" d="M290,1260 L300,1500"/><path vector-effect="non-scaling-stroke" d="M360,1260 L380,1500"/><path vector-effect="non-scaling-stroke" d="M1160,1180 C1200,1280 1230,1400 1260,1500"/><path vector-effect="non-scaling-stroke" d="M1130,1280 C1160,1350 1170,1430 1170,1500"/><path vector-effect="non-scaling-stroke" d="M870,1270 L860,1500"/><path vector-effect="non-scaling-stroke" d="M640,1260 L730,1500 M780,1300 L740,1500"/></g><g transform="translate(1260 500) scale(0.14999)"><path vector-effect="non-scaling-stroke" d="M790,125 L710,130 C680,115 640,120 600,160 L600,200 C550,150 480,140 400,160 C330,180 280,210 240,240 L270,230 C230,260 210,280 200,295 L250,320 C220,370 190,400 160,440 L180,470 C130,490 90,520 70,560 C50,620 80,680 150,720 L170,740 L180,730 C250,710 350,720 400,740"/><path vector-effect="non-scaling-stroke" d="M400,740 C440,720 480,740 520,780 L540,800"/><path vector-effect="non-scaling-stroke" d="M600,770 C680,760 760,770 800,800"/><path vector-effect="non-scaling-stroke" d="M460,420 L780,195"/><path vector-effect="non-scaling-stroke" d="M390,350 L420,335 L410,360 L430,380 L415,400 L460,430"/><path vector-effect="non-scaling-stroke" d="M455,470 C600,480 700,520 760,580 C800,630 820,680 830,720"/><path vector-effect="non-scaling-stroke" d="M625,330 C700,400 760,460 810,490"/><path vector-effect="non-scaling-stroke" d="M760,570 L880,490"/><path vector-effect="non-scaling-stroke" d="M800,180 C830,280 860,360 870,430 L860,460"/><path vector-effect="non-scaling-stroke" d="M800,175 L900,100 L910,0"/><path vector-effect="non-scaling-stroke" d="M905,150 L1060,310 L1140,320"/><path vector-effect="non-scaling-stroke" d="M860,450 L1060,320"/><path vector-effect="non-scaling-stroke" d="M1025,370 L1040,495 L1150,495 L1155,350 L1040,345"/><path vector-effect="non-scaling-stroke" d="M910,460 C930,600 950,700 970,800"/><path vector-effect="non-scaling-stroke" d="M1030,510 L995,800"/><path vector-effect="non-scaling-stroke" d="M1150,510 L1180,740"/><path vector-effect="non-scaling-stroke" d="M1220,370 C1230,500 1240,600 1250,700"/><path vector-effect="non-scaling-stroke" d="M1140,320 C1180,260 1200,150 1215,50 L1310,110 L1300,430 L1150,320"/><path vector-effect="non-scaling-stroke" d="M1330,170 C1400,200 1500,260 1580,310"/><path vector-effect="non-scaling-stroke" d="M1470,270 L1330,500"/><path vector-effect="non-scaling-stroke" d="M1250,480 L1400,570 C1480,520 1560,450 1580,380 C1580,360 1570,350 1560,345"/><path vector-effect="non-scaling-stroke" d="M1280,50 C1380,20 1450,20 1500,40 C1560,70 1620,100 1680,150 L1690,170 C1700,180 1720,200 1750,215 C1820,230 1860,280 1880,320 L1900,380 C1930,420 1950,450 1930,480 L1880,510 C1900,540 1910,560 1900,600 C1880,630 1830,650 1770,650 L1740,680 C1620,700 1500,730 1400,770"/><path vector-effect="non-scaling-stroke" d="M1920,520 L1930,600 L1900,640 C1890,690 1870,720 1850,740 C1700,760 1550,770 1380,780"/><path vector-effect="non-scaling-stroke" d="M1270,760 C1320,740 1370,740 1400,760"/><path vector-effect="non-scaling-stroke" d="M820,620 C870,680 900,740 910,800"/><path vector-effect="non-scaling-stroke" d="M1380,580 C1330,640 1300,700 1290,760"/><path vector-effect="non-scaling-stroke" d="M1090,0 C1080,60 1080,140 1090,220"/></g><g transform="translate(1220 640) scale(0.28000)"><path vector-effect="non-scaling-stroke" d="M230,0 L180,110 C130,180 90,230 80,280 L80,610 C120,640 200,650 320,645"/><path vector-effect="non-scaling-stroke" d="M160,120 C220,120 270,150 300,160"/><path vector-effect="non-scaling-stroke" d="M80,400 C120,370 170,380 200,390"/><path vector-effect="non-scaling-stroke" d="M280,210 C310,200 330,230 390,240 C420,270 420,330 410,400 L320,430 L270,300 Z"/><path vector-effect="non-scaling-stroke" d="M270,300 L240,330 C220,360 210,400 210,420 L205,525 C240,540 280,550 320,560"/><path vector-effect="non-scaling-stroke" d="M300,0 L310,220"/><path vector-effect="non-scaling-stroke" d="M380,0 L395,240"/><path vector-effect="non-scaling-stroke" d="M325,420 L340,700"/><path vector-effect="non-scaling-stroke" d="M390,420 L400,680"/><path vector-effect="non-scaling-stroke" d="M325,620 L400,610 L405,680 L330,680 Z"/><path vector-effect="non-scaling-stroke" d="M190,740 C250,720 300,700 340,690 L370,710 C400,730 430,900 465,1210 L260,1310 L230,1290 C200,1200 170,1050 170,950 L190,740"/><path vector-effect="non-scaling-stroke" d="M370,710 C360,900 360,1100 415,1260"/><path vector-effect="non-scaling-stroke" d="M165,1080 L360,1035"/><path vector-effect="non-scaling-stroke" d="M200,1030 L240,1020 L255,1115 L215,1125 Z"/><path vector-effect="non-scaling-stroke" d="M400,155 C480,140 560,180 620,220"/><path vector-effect="non-scaling-stroke" d="M415,550 C480,540 560,560 580,600"/><path vector-effect="non-scaling-stroke" d="M450,940 C500,930 560,950 580,960"/><path vector-effect="non-scaling-stroke" d="M470,1180 C500,1170 530,1170 550,1170"/><path vector-effect="non-scaling-stroke" d="M160,960 C120,1000 100,1200 120,1280"/><path vector-effect="non-scaling-stroke" d="M120,1290 C90,1350 80,1430 80,1500"/><path vector-effect="non-scaling-stroke" d="M650,0 L720,100 L800,0"/><path vector-effect="non-scaling-stroke" d="M645,30 C610,400 570,700 560,1000 C545,1200 545,1350 550,1500"/><path vector-effect="non-scaling-stroke" d="M610,840 C620,1000 630,1300 630,1500"/><path vector-effect="non-scaling-stroke" d="M810,0 C830,300 850,600 860,900 C870,1150 880,1350 890,1500"/><path vector-effect="non-scaling-stroke" d="M725,200 C705,215 715,245 740,240 C750,230 745,210 720,215"/><path vector-effect="non-scaling-stroke" d="M735,385 C710,400 715,430 735,425 C750,415 745,390 735,385"/><path vector-effect="non-scaling-stroke" d="M740,600 C720,610 725,640 745,635 C755,625 750,600 740,600"/><path vector-effect="non-scaling-stroke" d="M580,840 L725,825 L750,690 L775,800 L855,805"/><path vector-effect="non-scaling-stroke" d="M725,830 L730,970 L800,930 L795,840"/><path vector-effect="non-scaling-stroke" d="M735,1090 L785,1060 L770,1260 Z"/><path vector-effect="non-scaling-stroke" d="M850,240 C950,190 1100,170 1200,200"/><path vector-effect="non-scaling-stroke" d="M890,580 C1000,540 1150,550 1260,610"/><path vector-effect="non-scaling-stroke" d="M890,940 C1050,900 1200,910 1300,970"/><path vector-effect="non-scaling-stroke" d="M900,1210 C1050,1180 1250,1230 1420,1340"/><path vector-effect="non-scaling-stroke" d="M1165,0 C1220,180 1260,300 1270,450 L1280,580"/><path vector-effect="non-scaling-stroke" d="M1180,260 C1230,330 1260,420 1270,500"/><path vector-effect="non-scaling-stroke" d="M1280,650 C1320,750 1330,820 1330,900 L1300,970 C1350,1100 1370,1250 1380,1340"/><path vector-effect="non-scaling-stroke" d="M1420,1340 L1440,1500"/><path vector-effect="non-scaling-stroke" d="M1240,220 C1260,230 1270,260 1280,290"/><path vector-effect="non-scaling-stroke" d="M0,200 C20,240 20,300 0,340"/></g><g transform="translate(1220 1040) scale(0.28000)"><path vector-effect="non-scaling-stroke" d="M80,0 C70,80 80,150 95,200 C250,160 400,110 555,95 L545,0"/><path vector-effect="non-scaling-stroke" d="M95,200 C200,220 350,240 530,225"/><path vector-effect="non-scaling-stroke" d="M490,90 C520,200 550,280 580,300 C620,310 650,320 670,320"/><path vector-effect="non-scaling-stroke" d="M650,330 L740,290 L760,285 L780,300 L780,520 C750,580 710,610 690,600 C660,560 660,500 660,420 Z"/><path vector-effect="non-scaling-stroke" d="M655,340 L700,320 L750,360"/><path vector-effect="non-scaling-stroke" d="M630,0 L640,170"/><path vector-effect="non-scaling-stroke" d="M885,0 L890,40 C1000,50 1100,110 1200,140 C1300,170 1380,190 1400,200 C1420,160 1440,100 1440,0"/><path vector-effect="non-scaling-stroke" d="M1090,260 C1200,240 1300,230 1400,200"/><path vector-effect="non-scaling-stroke" d="M780,300 C790,500 800,700 805,900 L945,1020 L1090,900"/><path vector-effect="non-scaling-stroke" d="M1085,135 C1090,400 1060,700 1045,920"/><path vector-effect="non-scaling-stroke" d="M980,60 C970,400 950,700 950,960"/><path vector-effect="non-scaling-stroke" d="M860,960 C850,1010 840,1060 830,1120 L825,1240 C870,1260 920,1290 980,1310 C1050,1330 1100,1340 1155,1345 L1155,1300 C1100,1250 1050,1200 1030,1150 L1020,1120 L890,1140"/><path vector-effect="non-scaling-stroke" d="M1000,990 L1000,1120"/><path vector-effect="non-scaling-stroke" d="M880,980 L890,1100 M910,990 L920,1110 M940,1010 L950,1120"/><path vector-effect="non-scaling-stroke" d="M850,1030 L910,1120"/></g></g></svg>
<div class="ab" style="left:1670px;top:88px;width:330px;height:1412px;background:#3a3a3a;"></div>
<div class="ab" style="left:1670px;top:88px;width:3px;height:1412px;background:#2a2a2a;"></div>
<svg style="left:0px;top:0px" width="10" height="10" viewBox="0 0 10 10"><path d="M1681 96 V116 M1686 96 V116 M1691 96 V116" stroke="#8e8e8e" stroke-width="1.8"/></svg>
<svg style="left:0px;top:0px" width="10" height="10" viewBox="0 0 10 10"><path d="M1925 96 L1934 105 L1925 114 M1986 96 L1995 105 L1986 114 M1977 96 L1986 105 L1977 114" fill="none" stroke="#8a8a8a" stroke-width="2"/></svg>
<div class="ab" style="left:1673px;top:125px;width:327px;height:2px;background:#2e2e2e;"></div>
<div class="ab" style="left:1674px;top:127px;width:326px;height:41px;background:#363636;"></div>
<div class="ab" style="left:1718px;top:140px;width:147px;height:28px;background:#4d4d4d;"></div>
<div class="ab" style="left:1674px;top:168px;width:326px;height:10px;background:#4a4a4a;"></div>
<svg style="left:0px;top:0px" width="10" height="10" viewBox="0 0 10 10"><path d="M1689 143 h14 M1689 150 h14 M1689 157 h14" stroke="#8a8a8a" stroke-width="1.8"/></svg>
<svg style="left:0px;top:0px" width="10" height="10" viewBox="0 0 10 10"><rect x="1734" y="152" width="24" height="18" rx="3" fill="none" stroke="#b8b8b8" stroke-width="2"/><rect x="1740" y="147" width="23" height="17" rx="3" fill="#777" stroke="#b8b8b8" stroke-width="2"/></svg>
<div class="t" style="left:1773px;top:148px;font-size:21px;color:#dedede;">Navigator</div>
<div class="ab" style="left:1674px;top:178px;width:326px;height:154px;background:#2e2e2e;"></div>
<div class="ab" style="left:1785px;top:180px;width:101px;height:150px;background:#ffffff;"></div>
<svg style="left:1785px;top:228px" width="101" height="103" viewBox="0 0 101 103"><g transform="translate(0 0) scale(0.0797) translate(-397 -187)" fill="none" stroke="#9a9a9a" stroke-width="0.6" vector-effect="non-scaling-stroke"><g transform="translate(590 320) scale(0.13333)"><path vector-effect="non-scaling-stroke" d="M850,1230 C840,1350 860,1400 920,1440"/><path vector-effect="non-scaling-stroke" d="M900,1230 C940,1320 980,1410 1000,1500"/><path vector-effect="non-scaling-stroke" d="M960,1180 C1020,1260 1080,1330 1200,1420"/><path vector-effect="non-scaling-stroke" d="M1110,1330 C1200,1330 1300,1350 1350,1400 C1370,1440 1380,1480 1390,1500"/><path vector-effect="non-scaling-stroke" d="M100,1480 C200,1440 280,1400 340,1380"/><path vector-effect="non-scaling-stroke" d="M470,1120 C440,1250 430,1400 460,1500"/><path vector-effect="non-scaling-stroke" d="M520,1080 C530,1200 540,1350 520,1500"/><path vector-effect="non-scaling-stroke" d="M1030,1140 C1060,1200 1090,1260 1110,1290"/></g><g transform="translate(600 320) scale(0.10667)"><path vector-effect="non-scaling-stroke" d="M770,235 C700,200 620,200 535,245 C560,270 590,290 620,300 C520,330 420,360 330,430 C290,470 260,540 250,620"/><path vector-effect="non-scaling-stroke" d="M410,530 C350,620 300,700 250,760 C200,810 150,860 90,910 L190,920 C150,950 120,970 90,990 L210,1010"/><path vector-effect="non-scaling-stroke" d="M185,735 L240,760"/><path vector-effect="non-scaling-stroke" d="M830,215 C870,160 950,120 1110,110 L990,215 C1100,210 1200,250 1280,300 C1350,350 1420,420 1460,500"/><path vector-effect="non-scaling-stroke" d="M930,300 C960,260 1000,240 1060,230"/><path vector-effect="non-scaling-stroke" d="M340,910 C300,970 260,1030 230,1080 L360,1120"/><path vector-effect="non-scaling-stroke" d="M560,580 C500,650 460,760 460,900 C470,1000 500,1080 540,1130"/><path vector-effect="non-scaling-stroke" d="M470,960 C420,920 370,940 380,1020 C390,1100 440,1150 530,1160"/><path vector-effect="non-scaling-stroke" d="M1440,520 C1520,650 1590,800 1600,900 L1600,1070 L1540,900 C1520,1000 1460,1080 1420,1130 L1580,1105 L1500,1080"/><path vector-effect="non-scaling-stroke" d="M660,950 C720,850 780,760 830,690 C860,800 890,900 910,1000"/><path vector-effect="non-scaling-stroke" d="M940,740 L930,980"/><path vector-effect="non-scaling-stroke" d="M1140,660 C1100,850 1050,1000 870,1160"/><path vector-effect="non-scaling-stroke" d="M1140,660 C1180,780 1230,870 1280,950 L1210,1180 C1280,1130 1340,1080 1380,1000 L1400,770"/><path vector-effect="non-scaling-stroke" d="M630,880 C700,860 800,840 880,835"/><path vector-effect="non-scaling-stroke" d="M1160,810 C1230,815 1300,820 1370,825"/><path vector-effect="non-scaling-stroke" d="M640,1000 C700,970 780,960 880,1000"/><path vector-effect="non-scaling-stroke" d="M1100,960 C1180,940 1240,940 1290,945"/><path vector-effect="non-scaling-stroke" d="M770,1030 C740,1060 750,1110 780,1100 C810,1090 820,1040 800,1020"/><path vector-effect="non-scaling-stroke" d="M1160,1000 C1140,1030 1150,1060 1170,1055 C1190,1040 1190,1000 1170,995"/><path vector-effect="non-scaling-stroke" d="M860,1350 C930,1330 1000,1320 1080,1305 C1040,1350 1000,1380 960,1385 C920,1380 880,1360 860,1350"/><path vector-effect="non-scaling-stroke" d="M560,1260 C640,1330 720,1400 810,1470 C870,1510 930,1520 960,1530 C1020,1500 1060,1470 1100,1440"/><path vector-effect="non-scaling-stroke" d="M1100,1440 C1150,1380 1220,1340 1310,1320 L1290,1280 C1280,1230 1270,1180 1290,1150"/><path vector-effect="non-scaling-stroke" d="M540,1130 L600,1500 L630,1750"/><path vector-effect="non-scaling-stroke" d="M460,1250 C420,1320 360,1400 260,1500 C220,1580 190,1640 180,1690"/><path vector-effect="non-scaling-stroke" d="M370,1370 L530,1380 C490,1420 460,1500 420,1650"/><path vector-effect="non-scaling-stroke" d="M330,1220 L420,1190"/><path vector-effect="non-scaling-stroke" d="M720,500 C780,450 830,420 860,410 L850,440 C800,470 760,490 720,500"/><path vector-effect="non-scaling-stroke" d="M990,430 L1030,400"/><path vector-effect="non-scaling-stroke" d="M1230,340 C1280,370 1320,400 1350,450"/><path vector-effect="non-scaling-stroke" d="M1070,460 C1130,500 1200,600 1250,780"/><path vector-effect="non-scaling-stroke" d="M550,1090 C600,1140 650,1180 720,1220 L760,1250"/><path vector-effect="non-scaling-stroke" d="M620,1150 L660,1210"/></g><g transform="translate(480 250) scale(0.26667)"><path vector-effect="non-scaling-stroke" d="M585,165 L610,80 L640,160"/><path vector-effect="non-scaling-stroke" d="M595,130 L630,125"/><path vector-effect="non-scaling-stroke" d="M655,115 C640,120 640,160 660,160 C680,160 685,120 655,115"/><path vector-effect="non-scaling-stroke" d="M705,75 L700,160"/><path vector-effect="non-scaling-stroke" d="M703,130 C730,110 760,140 705,158"/><path vector-effect="non-scaling-stroke" d="M795,120 C760,115 755,160 785,155 C800,150 800,125 795,120 L805,155 L830,160"/></g><g transform="translate(490 500) scale(0.26667)"><path vector-effect="non-scaling-stroke" d="M520,20 L440,70 C350,150 260,250 210,345 C160,450 120,600 105,770 L80,770 C60,900 50,1000 80,1100 C100,1250 120,1350 140,1380 L270,1360 L320,1440 L470,1240 L430,1110"/><path vector-effect="non-scaling-stroke" d="M205,370 C260,470 300,560 300,660 L295,1020"/><path vector-effect="non-scaling-stroke" d="M130,1050 L220,985 L430,1120"/><path vector-effect="non-scaling-stroke" d="M440,70 C390,200 350,320 345,440"/><path vector-effect="non-scaling-stroke" d="M390,440 L575,325 C560,260 520,200 515,130 C520,80 540,30 550,0"/><path vector-effect="non-scaling-stroke" d="M620,250 L610,550 C610,800 640,1100 700,1500"/><path vector-effect="non-scaling-stroke" d="M850,480 C860,700 870,1000 880,1200 C870,1350 860,1450 870,1500"/><path vector-effect="non-scaling-stroke" d="M900,10 L1040,20 C1100,150 1150,250 1170,420 C1100,380 1030,340 950,315 L880,330"/><path vector-effect="non-scaling-stroke" d="M1040,20 C1150,130 1230,200 1270,300"/><path vector-effect="non-scaling-stroke" d="M1030,1120 L1040,1270 L1200,1470"/><path vector-effect="non-scaling-stroke" d="M1030,1120 C1100,1200 1170,1280 1230,1340"/><path vector-effect="non-scaling-stroke" d="M620,160 L740,185 L880,120"/><path vector-effect="non-scaling-stroke" d="M640,240 C700,250 780,240 850,190"/><path vector-effect="non-scaling-stroke" d="M680,300 C720,380 760,440 770,470 C800,400 850,330 880,240"/><path vector-effect="non-scaling-stroke" d="M760,470 C750,520 770,540 780,520 C790,490 780,470 760,470"/><path vector-effect="non-scaling-stroke" d="M560,390 C530,450 515,520 510,610"/><path vector-effect="non-scaling-stroke" d="M520,620 L545,615 L548,655 L525,655 Z"/><path vector-effect="non-scaling-stroke" d="M580,1280 C530,1320 510,1350 530,1370 C570,1360 590,1310 580,1280"/><path vector-effect="non-scaling-stroke" d="M900,1250 C930,1280 970,1330 980,1360 C940,1340 900,1300 900,1250"/><path vector-effect="non-scaling-stroke" d="M640,1090 L880,1085"/><path vector-effect="non-scaling-stroke" d="M660,1170 L880,1160"/><path vector-effect="non-scaling-stroke" d="M700,1090 L710,1190 L820,1190 L810,1100 Z"/><path vector-effect="non-scaling-stroke" d="M690,1140 L730,1140"/><path vector-effect="non-scaling-stroke" d="M580,0 C560,100 540,200 520,250"/></g><g transform="translate(600 640) scale(0.14999)"><path vector-effect="non-scaling-stroke" d="M350,610 C450,500 600,330 800,120"/><path vector-effect="non-scaling-stroke" d="M470,560 C560,510 620,460 700,370 C750,290 790,200 800,140"/><path vector-effect="non-scaling-stroke" d="M420,560 L510,760 L570,780 C650,700 750,600 830,470"/><path vector-effect="non-scaling-stroke" d="M630,510 L740,390 L760,430 L660,550 Z"/><path vector-effect="non-scaling-stroke" d="M620,420 L690,350"/><path vector-effect="non-scaling-stroke" d="M700,500 L770,560"/><path vector-effect="non-scaling-stroke" d="M400,790 L500,750"/><path vector-effect="non-scaling-stroke" d="M180,540 C190,470 260,390 310,380 C310,450 270,550 210,560 Z"/><path vector-effect="non-scaling-stroke" d="M220,520 C240,470 270,440 300,420"/><path vector-effect="non-scaling-stroke" d="M160,1000 C180,930 240,850 290,800 C300,880 270,960 210,990 Z"/><path vector-effect="non-scaling-stroke" d="M210,950 C230,900 260,860 290,840"/><path vector-effect="non-scaling-stroke" d="M900,350 L960,340 C1010,420 1050,490 1070,560 C1000,520 920,440 900,350"/><path vector-effect="non-scaling-stroke" d="M870,820 L920,810 C980,840 1030,880 1050,930 C970,930 900,900 880,870 Z"/><path vector-effect="non-scaling-stroke" d="M890,0 L900,150 L880,160 L900,250 L915,200 L910,0"/></g><g transform="translate(490 880) scale(0.26667)"><path vector-effect="non-scaling-stroke" d="M330,40 C330,120 340,180 360,220 L400,350 L430,360 C540,300 640,240 720,190 L700,60 C640,60 580,100 400,220"/><path vector-effect="non-scaling-stroke" d="M860,70 L870,210 L1110,340 L1140,330 C1160,260 1180,230 1190,210 L1250,130 L1250,0"/><path vector-effect="non-scaling-stroke" d="M880,60 L1180,215"/><path vector-effect="non-scaling-stroke" d="M1150,0 L1250,120"/><path vector-effect="non-scaling-stroke" d="M745,60 L750,500 L820,90 Z"/><path vector-effect="non-scaling-stroke" d="M440,380 C460,600 480,800 485,900 C480,1100 490,1300 500,1500"/><path vector-effect="non-scaling-stroke" d="M1080,330 C1040,500 1000,600 960,720 C950,760 940,800 930,820 C910,850 890,900 880,900 L785,1100 C770,1150 790,1200 800,1250 C810,1350 850,1420 850,1500"/><path vector-effect="non-scaling-stroke" d="M760,850 C820,850 880,850 910,840"/><path vector-effect="non-scaling-stroke" d="M755,900 C750,1100 740,1300 720,1500"/></g><g transform="translate(490 1180) scale(0.21333)"><path vector-effect="non-scaling-stroke" d="M600,0 C600,300 640,600 640,900 L615,1010 L630,1045"/><path vector-effect="non-scaling-stroke" d="M940,0 C940,200 920,350 900,500 L880,680"/><path vector-effect="non-scaling-stroke" d="M905,655 C890,800 880,950 910,1120 L860,1275"/><path vector-effect="non-scaling-stroke" d="M1000,80 C1000,200 1040,300 1060,400 L1040,580 L910,490"/><path vector-effect="non-scaling-stroke" d="M630,1040 C660,990 720,980 780,1000 C850,1030 890,1070 890,1110"/><path vector-effect="non-scaling-stroke" d="M700,995 C680,1050 620,1080 470,1150 L430,1180 L435,1265 C550,1280 650,1285 780,1265 L795,1220 L800,1265 L860,1275"/><path vector-effect="non-scaling-stroke" d="M400,1225 L450,1165"/></g><g transform="translate(760 560) scale(0.22676)"><path vector-effect="non-scaling-stroke" d="M240,0 L300,100 L410,330 L450,540"/><path vector-effect="non-scaling-stroke" d="M300,110 C250,250 200,400 185,560 L180,620 C200,800 240,1000 250,1300 L270,1500"/><path vector-effect="non-scaling-stroke" d="M250,1110 L390,1250 L500,1200 C530,1050 560,900 570,720"/><path vector-effect="non-scaling-stroke" d="M400,900 C470,880 520,870 560,820"/><path vector-effect="non-scaling-stroke" d="M410,600 C440,580 500,570 540,590 L570,720 L560,780 L490,790 L440,720 L400,700 Z"/><path vector-effect="non-scaling-stroke" d="M460,690 L530,620 M480,760 L560,700"/><path vector-effect="non-scaling-stroke" d="M390,700 C400,800 420,950 430,1100 L510,960 L560,820"/><path vector-effect="non-scaling-stroke" d="M240,800 C280,700 330,650 400,620"/><path vector-effect="non-scaling-stroke" d="M260,1100 C270,900 280,750 300,700"/><path vector-effect="non-scaling-stroke" d="M440,570 C500,470 560,420 590,380"/><path vector-effect="non-scaling-stroke" d="M490,580 C560,480 650,430 730,430"/><path vector-effect="non-scaling-stroke" d="M480,60 C520,200 540,350 520,450"/><path vector-effect="non-scaling-stroke" d="M520,60 C620,80 700,200 760,400 L770,520"/><path vector-effect="non-scaling-stroke" d="M560,180 L580,400 M600,120 L640,400 M660,150 L700,420"/><path vector-effect="non-scaling-stroke" d="M270,1340 L290,1500"/></g><g transform="translate(900 260) scale(0.05999)"><path vector-effect="non-scaling-stroke" d="M360,240 C370,380 390,500 410,640"/><path vector-effect="non-scaling-stroke" d="M510,380 C470,420 430,460 420,500 C500,530 600,560 720,550"/><path vector-effect="non-scaling-stroke" d="M720,540 C700,480 720,420 800,360 C860,350 860,480 780,510 C740,520 720,460 740,430"/><path vector-effect="non-scaling-stroke" d="M960,510 L940,340 C1000,320 1050,330 1080,360 C1110,420 1130,480 1160,490 C1200,480 1240,400 1250,330"/><path vector-effect="non-scaling-stroke" d="M1250,330 C1320,340 1340,440 1300,490 C1260,500 1250,420 1260,380"/><path vector-effect="non-scaling-stroke" d="M1430,420 C1500,380 1580,360 1560,310 C1500,280 1430,330 1420,400 C1420,470 1480,490 1550,460 L1690,425"/></g><g transform="translate(840 250) scale(0.26667)"></g><g transform="translate(880 330) scale(0.11331)"><path vector-effect="non-scaling-stroke" d="M490,290 L260,195 C250,280 280,370 340,450"/><path vector-effect="non-scaling-stroke" d="M270,220 C290,300 320,360 350,420"/><path vector-effect="non-scaling-stroke" d="M340,450 C390,330 480,250 600,160 C720,90 850,70 950,100 C1000,120 1040,150 1060,180"/><path vector-effect="non-scaling-stroke" d="M1070,180 C1110,170 1150,190 1200,220 L1320,145 C1360,220 1380,320 1370,420 C1360,480 1340,520 1300,550"/><path vector-effect="non-scaling-stroke" d="M1140,250 L1260,190 L1230,260"/><path vector-effect="non-scaling-stroke" d="M730,300 C760,240 820,240 870,320"/><path vector-effect="non-scaling-stroke" d="M340,450 C300,540 290,620 280,720 C260,850 220,950 130,1060 C220,1030 290,990 340,940"/><path vector-effect="non-scaling-stroke" d="M350,790 C340,900 350,1050 370,1150 L300,1260 L360,1210"/><path vector-effect="non-scaling-stroke" d="M410,580 C410,700 420,800 440,880 C450,950 460,1050 430,1100 L500,1210"/><path vector-effect="non-scaling-stroke" d="M540,510 C560,650 600,780 620,850 C650,900 690,960 760,1000"/><path vector-effect="non-scaling-stroke" d="M720,515 C760,600 800,700 840,800 L910,1000 C850,960 760,900 700,850"/><path vector-effect="non-scaling-stroke" d="M730,530 C820,620 920,700 1050,830"/><path vector-effect="non-scaling-stroke" d="M850,670 C950,650 1030,690 1080,715"/><path vector-effect="non-scaling-stroke" d="M1050,630 C1060,750 1070,900 1050,1000 L1000,1120 C1050,1060 1090,1000 1110,960"/><path vector-effect="non-scaling-stroke" d="M1240,730 C1240,850 1230,1000 1200,1080 C1170,1160 1110,1200 1010,1420"/><path vector-effect="non-scaling-stroke" d="M450,880 C470,1000 520,1080 570,1180 C650,1250 750,1320 810,1350 C900,1320 1000,1260 1100,1200"/><path vector-effect="non-scaling-stroke" d="M470,730 C520,690 570,690 600,700"/><path vector-effect="non-scaling-stroke" d="M460,850 C520,830 580,840 620,870"/><path vector-effect="non-scaling-stroke" d="M550,880 C540,940 580,970 620,960 C630,920 600,880 550,880"/><path vector-effect="non-scaling-stroke" d="M870,800 C950,790 1030,810 1090,850"/><path vector-effect="non-scaling-stroke" d="M930,870 C920,920 950,960 980,950 C1000,920 990,880 960,870"/><path vector-effect="non-scaling-stroke" d="M700,1150 C760,1150 830,1160 880,1160 L895,1140 C900,1200 860,1250 810,1250 C760,1240 730,1200 720,1180"/><path vector-effect="non-scaling-stroke" d="M1130,230 C1180,350 1230,500 1240,650 L1240,730"/><path vector-effect="non-scaling-stroke" d="M1250,420 C1320,450 1400,430 1440,520 C1470,700 1500,900 1560,1000 L1620,1100 C1560,1060 1520,1020 1490,990 C1460,1060 1430,1150 1400,1250 C1380,1300 1380,1350 1400,1420"/><path vector-effect="non-scaling-stroke" d="M1270,500 C1330,600 1350,700 1350,800 L1370,820 L1360,1130 L1310,960 L1300,1180"/><path vector-effect="non-scaling-stroke" d="M870,1360 L880,1460"/><path vector-effect="non-scaling-stroke" d="M1190,1180 C1200,1260 1220,1350 1240,1430"/></g><g transform="translate(850 470) scale(0.15504)"><path vector-effect="non-scaling-stroke" d="M460,235 C550,220 650,210 790,210 L1090,130 L1110,210"/><path vector-effect="non-scaling-stroke" d="M1130,180 C1250,150 1350,120 1450,120 L1500,125"/><path vector-effect="non-scaling-stroke" d="M460,240 L420,250 C370,290 320,340 285,390 C290,420 320,440 350,460 C450,540 600,640 720,710 C760,720 790,725 810,725"/><path vector-effect="non-scaling-stroke" d="M480,240 C600,320 700,390 790,450 C820,480 840,500 860,540"/><path vector-effect="non-scaling-stroke" d="M1500,125 C1550,200 1590,250 1610,310 C1590,370 1520,430 1440,490 C1330,560 1230,620 1130,690"/><path vector-effect="non-scaling-stroke" d="M1080,480 C1200,400 1300,300 1450,170 C1460,150 1480,135 1500,125"/><path vector-effect="non-scaling-stroke" d="M360,440 L495,320"/><path vector-effect="non-scaling-stroke" d="M450,515 L605,370"/><path vector-effect="non-scaling-stroke" d="M590,625 L690,410"/><path vector-effect="non-scaling-stroke" d="M720,700 L775,510"/><path vector-effect="non-scaling-stroke" d="M1220,605 L1185,445"/><path vector-effect="non-scaling-stroke" d="M1350,565 L1280,360"/><path vector-effect="non-scaling-stroke" d="M1480,440 L1370,290"/><path vector-effect="non-scaling-stroke" d="M1540,315 L1450,200"/><path vector-effect="non-scaling-stroke" d="M680,260 C700,320 740,380 790,440 L830,490 C860,520 880,550 900,550 L950,520 L1020,510 C1060,490 1080,460 1100,420 C1120,380 1160,330 1180,280 C1190,250 1200,230 1190,210"/><path vector-effect="non-scaling-stroke" d="M285,430 L120,670 L160,839"/><path vector-effect="non-scaling-stroke" d="M175,665 C260,660 330,720 400,839"/><path vector-effect="non-scaling-stroke" d="M1620,340 C1680,420 1760,470 1790,560 L1820,839"/><path vector-effect="non-scaling-stroke" d="M1760,565 C1680,640 1620,720 1560,839"/><path vector-effect="non-scaling-stroke" d="M540,190 L560,100 L590,150 L600,70 L640,200"/><path vector-effect="non-scaling-stroke" d="M830,100 L835,200"/><path vector-effect="non-scaling-stroke" d="M1230,0 C1200,50 1190,100 1200,150 L1250,190"/><path vector-effect="non-scaling-stroke" d="M835,650 C860,700 900,780 950,839"/><path vector-effect="non-scaling-stroke" d="M820,600 L825,839"/><path vector-effect="non-scaling-stroke" d="M1090,500 L1120,700 L1110,839"/></g><g transform="translate(850 520) scale(0.15504)"><path vector-effect="non-scaling-stroke" d="M120,350 C150,450 180,550 190,600 C170,700 160,800 150,900"/><path vector-effect="non-scaling-stroke" d="M175,345 C260,350 330,400 380,500 C440,620 500,760 550,1020"/><path vector-effect="non-scaling-stroke" d="M240,520 L300,850"/><path vector-effect="non-scaling-stroke" d="M290,420 L340,820"/><path vector-effect="non-scaling-stroke" d="M350,600 L400,870"/><path vector-effect="non-scaling-stroke" d="M430,660 L470,880"/><path vector-effect="non-scaling-stroke" d="M200,560 L230,870"/><path vector-effect="non-scaling-stroke" d="M1780,230 C1800,400 1850,600 1880,800 C1900,900 1910,1000 1910,1100"/><path vector-effect="non-scaling-stroke" d="M1780,240 C1680,320 1600,420 1520,560 C1450,700 1400,850 1360,950"/><path vector-effect="non-scaling-stroke" d="M1740,290 L1660,600"/><path vector-effect="non-scaling-stroke" d="M1690,380 L1600,660"/><path vector-effect="non-scaling-stroke" d="M1770,460 L1720,740"/><path vector-effect="non-scaling-stroke" d="M1620,500 L1540,700"/><path vector-effect="non-scaling-stroke" d="M1510,720 C1600,700 1750,760 1850,880"/><path vector-effect="non-scaling-stroke" d="M810,420 C820,550 840,700 900,800 C940,860 980,880 1000,900"/><path vector-effect="non-scaling-stroke" d="M830,340 C880,420 940,500 990,540 C1040,500 1080,450 1110,380"/><path vector-effect="non-scaling-stroke" d="M1120,370 C1140,450 1160,550 1160,620 C1120,700 1080,760 1020,860"/><path vector-effect="non-scaling-stroke" d="M1000,560 L1010,690"/><path vector-effect="non-scaling-stroke" d="M990,580 C1020,580 1050,600 1040,620 C1020,630 1000,640 1000,650"/><path vector-effect="non-scaling-stroke" d="M975,700 L1010,670 L1020,690 Z"/><path vector-effect="non-scaling-stroke" d="M1230,690 L1300,550 L1390,590 L1420,760 L1360,800 L1280,780 Z"/><path vector-effect="non-scaling-stroke" d="M1300,610 C1250,650 1250,760 1320,790 C1400,780 1420,720 1370,630 C1340,600 1320,600 1300,610"/><path vector-effect="non-scaling-stroke" d="M660,665 C720,670 760,710 750,780 C740,850 760,900 850,910"/><path vector-effect="non-scaling-stroke" d="M650,760 C680,850 700,900 760,910"/></g><g transform="translate(840 600) scale(0.26667)"><path vector-effect="non-scaling-stroke" d="M370,800 L310,870 L300,1500"/><path vector-effect="non-scaling-stroke" d="M450,810 L410,940 L400,1500"/><path vector-effect="non-scaling-stroke" d="M870,820 C910,1000 940,1200 940,1500"/><path vector-effect="non-scaling-stroke" d="M1000,770 L1040,830 L1090,1500"/><path vector-effect="non-scaling-stroke" d="M660,1020 L660,1500"/><path vector-effect="non-scaling-stroke" d="M630,1040 L750,910"/><path vector-effect="non-scaling-stroke" d="M640,970 L715,890"/><path vector-effect="non-scaling-stroke" d="M1060,880 C1110,890 1150,860 1170,800 C1190,700 1180,600 1200,520 C1220,420 1260,350 1330,330 C1420,330 1460,420 1430,500 C1390,530 1350,510 1350,480 C1360,430 1330,380 1300,400"/><path vector-effect="non-scaling-stroke" d="M1060,990 C1150,1010 1220,960 1260,880 C1280,780 1280,700 1270,600 C1290,520 1310,470 1350,470"/><path vector-effect="non-scaling-stroke" d="M1220,520 L1320,400 M1230,560 L1360,420 M1260,620 L1400,420"/><path vector-effect="non-scaling-stroke" d="M0,40 L50,120 L80,280 L30,360"/><path vector-effect="non-scaling-stroke" d="M20,460 L30,620 L60,780 L120,600 L180,540"/><path vector-effect="non-scaling-stroke" d="M0,900 L20,915 L120,870 L160,700 L180,540"/></g><g transform="translate(880 650) scale(0.14000)"><path vector-effect="non-scaling-stroke" d="M0,200 C80,120 180,70 290,50 C330,45 350,30 350,0"/><path vector-effect="non-scaling-stroke" d="M200,115 L410,210"/><path vector-effect="non-scaling-stroke" d="M395,230 C440,280 480,330 510,370"/><path vector-effect="non-scaling-stroke" d="M80,770 C150,850 250,930 280,970 C330,960 400,920 460,880"/><path vector-effect="non-scaling-stroke" d="M290,370 C240,420 200,500 180,600 C170,680 190,760 260,810 C320,840 400,860 470,850 C540,830 600,760 640,600"/><path vector-effect="non-scaling-stroke" d="M290,370 L470,380"/><path vector-effect="non-scaling-stroke" d="M270,420 L430,430"/><path vector-effect="non-scaling-stroke" d="M215,550 L440,505"/><path vector-effect="non-scaling-stroke" d="M215,700 L440,590"/><path vector-effect="non-scaling-stroke" d="M370,830 L480,680"/><path vector-effect="non-scaling-stroke" d="M490,370 C540,320 600,260 680,250 L780,300"/><path vector-effect="non-scaling-stroke" d="M460,440 C440,520 450,600 490,640 C530,670 600,660 650,590 L760,500 C790,480 780,450 740,460 L680,460"/><path vector-effect="non-scaling-stroke" d="M610,405 L780,360"/><path vector-effect="non-scaling-stroke" d="M700,350 C730,340 780,340 800,360"/><path vector-effect="non-scaling-stroke" d="M620,320 L780,310"/><path vector-effect="non-scaling-stroke" d="M720,540 L780,700 C850,660 950,650 1040,660 L1030,560"/><path vector-effect="non-scaling-stroke" d="M650,150 L680,140 L720,180 L650,230 L620,160 Z"/><path vector-effect="non-scaling-stroke" d="M680,190 C800,140 900,120 1010,130 L1050,150 L1030,190"/><path vector-effect="non-scaling-stroke" d="M520,160 L620,180"/><path vector-effect="non-scaling-stroke" d="M880,310 C940,270 1000,230 1070,210 C1130,200 1180,240 1200,280 L1220,400 C1230,480 1230,550 1210,600 L1170,600 C1090,570 1000,530 940,500 C930,480 950,470 980,480"/><path vector-effect="non-scaling-stroke" d="M880,350 L940,340"/><path vector-effect="non-scaling-stroke" d="M900,420 L950,400"/><path vector-effect="non-scaling-stroke" d="M930,440 L980,440"/><path vector-effect="non-scaling-stroke" d="M950,300 C1000,300 1080,320 1160,370"/><path vector-effect="non-scaling-stroke" d="M980,470 L1150,470"/><path vector-effect="non-scaling-stroke" d="M1200,280 L1300,270 C1400,290 1460,300 1490,330 C1510,400 1510,500 1500,600 C1450,680 1350,730 1200,700 C1170,680 1150,640 1150,620"/><path vector-effect="non-scaling-stroke" d="M1230,350 C1300,360 1380,390 1470,420"/><path vector-effect="non-scaling-stroke" d="M1240,460 C1300,500 1390,540 1480,560"/><path vector-effect="non-scaling-stroke" d="M1250,570 C1300,600 1350,630 1420,660"/><path vector-effect="non-scaling-stroke" d="M1260,270 C1270,200 1280,160 1320,110 C1400,90 1480,80 1590,80"/><path vector-effect="non-scaling-stroke" d="M1880,0 C1900,100 1910,200 1910,400 C1900,550 1850,680 1750,760 C1650,810 1550,830 1480,820 C1400,800 1330,760 1290,730"/><path vector-effect="non-scaling-stroke" d="M160,930 L170,1080 C200,1130 400,1160 600,1170 L800,1170 C870,1160 910,1130 920,1050 L950,1040 C960,1100 1000,1140 1060,1160 C1200,1160 1400,1130 1560,1100 C1650,1060 1720,1010 1740,950 C1740,900 1720,860 1700,840"/><path vector-effect="non-scaling-stroke" d="M560,820 C800,810 1000,790 1300,740"/><path vector-effect="non-scaling-stroke" d="M300,980 L300,1130"/><path vector-effect="non-scaling-stroke" d="M450,940 L460,1160"/><path vector-effect="non-scaling-stroke" d="M670,850 L700,1070"/><path vector-effect="non-scaling-stroke" d="M810,860 L830,1180"/><path vector-effect="non-scaling-stroke" d="M920,710 L930,1030"/><path vector-effect="non-scaling-stroke" d="M1120,820 C1150,900 1180,1000 1190,1150"/><path vector-effect="non-scaling-stroke" d="M1420,860 C1450,950 1470,1050 1480,1120"/><path vector-effect="non-scaling-stroke" d="M1690,810 L1700,900"/><path vector-effect="non-scaling-stroke" d="M1620,1080 C1660,1150 1690,1220 1700,1286"/></g><g transform="translate(840 980) scale(0.30675)"><path vector-effect="non-scaling-stroke" d="M265,0 C265,150 270,250 300,300 L340,370 L370,690 L450,750 L540,940"/><path vector-effect="non-scaling-stroke" d="M570,0 C560,300 550,600 545,940 L660,1030 C700,1060 730,1080 760,1075 L840,1010 L990,860 L990,610"/><path vector-effect="non-scaling-stroke" d="M940,0 L960,80 C970,250 970,450 980,610"/><path vector-effect="non-scaling-stroke" d="M815,0 C810,400 800,800 795,1030"/><path vector-effect="non-scaling-stroke" d="M330,0 C320,200 300,300 310,340"/><path vector-effect="non-scaling-stroke" d="M330,290 C400,420 440,550 470,690"/><path vector-effect="non-scaling-stroke" d="M470,890 C440,950 420,1000 410,1100 C410,1150 420,1190 490,1230 C570,1250 620,1200 660,1060 C620,1000 580,970 520,970 C470,980 440,1010 420,1080"/><path vector-effect="non-scaling-stroke" d="M420,1180 C500,1200 580,1180 630,1040"/><path vector-effect="non-scaling-stroke" d="M460,760 L540,830 M470,820 L560,760 M480,860 L540,800 M490,880 L530,860 M450,780 L570,690"/><path vector-effect="non-scaling-stroke" d="M660,1060 C640,1200 620,1300 610,1420 C650,1430 750,1420 850,1400 C950,1400 1020,1350 1060,1240 C1080,1150 1050,1100 990,1100 C900,1090 820,1150 780,1220 L760,1380"/><path vector-effect="non-scaling-stroke" d="M840,1010 L780,1160"/><path vector-effect="non-scaling-stroke" d="M740,1100 L810,1140 M750,1160 L830,1060 M760,1180 L810,1130"/><path vector-effect="non-scaling-stroke" d="M730,1340 C800,1250 880,1160 970,1100"/><path vector-effect="non-scaling-stroke" d="M610,1390 C700,1380 780,1380 860,1400"/><path vector-effect="non-scaling-stroke" d="M650,1060 L650,1230 L720,1270"/></g><g transform="translate(1320 270) scale(0.05000)"><path vector-effect="non-scaling-stroke" d="M270,350 C340,440 420,520 510,600"/><path vector-effect="non-scaling-stroke" d="M620,330 C560,500 480,700 450,910"/><path vector-effect="non-scaling-stroke" d="M790,520 C700,560 700,760 780,760 C870,740 900,600 880,540 C860,510 800,520 790,520"/><path vector-effect="non-scaling-stroke" d="M1070,490 C1040,560 1020,700 1080,740 C1150,760 1220,650 1250,520 C1250,600 1290,640 1440,590"/><path vector-effect="non-scaling-stroke" d="M1470,380 C1520,450 1550,700 1540,940 L1460,900"/><path vector-effect="non-scaling-stroke" d="M1710,280 L1715,290"/><path vector-effect="non-scaling-stroke" d="M1680,420 C1690,520 1700,600 1720,680"/></g><g transform="translate(1220 260) scale(0.28000)"><path vector-effect="non-scaling-stroke" d="M460,400 C500,360 540,340 580,330 C590,320 620,300 665,300 L635,320 C700,300 780,320 830,370 C880,420 910,470 930,530 L900,490 C910,550 900,650 860,720 L900,680 C880,740 860,780 840,820 L860,760 C840,800 810,830 780,850 C800,810 810,780 800,750"/><path vector-effect="non-scaling-stroke" d="M520,340 C480,390 440,450 420,520 C400,560 410,600 415,620 L440,570 C460,650 480,700 500,750 L490,700"/><path vector-effect="non-scaling-stroke" d="M470,520 C500,600 520,680 540,740"/><path vector-effect="non-scaling-stroke" d="M520,640 C530,720 560,790 650,850 C700,830 730,810 760,790"/><path vector-effect="non-scaling-stroke" d="M540,800 C560,830 570,850 550,870 L590,850 L600,870"/><path vector-effect="non-scaling-stroke" d="M575,470 C560,540 540,600 520,650"/><path vector-effect="non-scaling-stroke" d="M570,480 C620,560 660,600 690,630"/><path vector-effect="non-scaling-stroke" d="M650,520 C680,560 700,610 720,630"/><path vector-effect="non-scaling-stroke" d="M690,520 C730,515 760,520 780,530"/><path vector-effect="non-scaling-stroke" d="M760,560 C790,600 800,650 790,700"/><path vector-effect="non-scaling-stroke" d="M830,520 C850,600 850,680 800,760"/><path vector-effect="non-scaling-stroke" d="M500,560 C530,540 570,540 590,550"/><path vector-effect="non-scaling-stroke" d="M565,640 C560,660 570,670 580,660 C585,640 575,630 565,640"/><path vector-effect="non-scaling-stroke" d="M710,610 C740,600 770,610 790,620"/><path vector-effect="non-scaling-stroke" d="M720,630 C715,650 725,665 735,655 C740,635 730,625 720,630"/><path vector-effect="non-scaling-stroke" d="M640,770 C655,770 655,780 645,780"/><path vector-effect="non-scaling-stroke" d="M630,850 L620,910 M710,830 L720,920"/><path vector-effect="non-scaling-stroke" d="M675,1286 L720,1460 L756,1286"/><path vector-effect="non-scaling-stroke" d="M682,1286 L700,1400"/><path vector-effect="non-scaling-stroke" d="M230,1250 L160,1500"/><path vector-effect="non-scaling-stroke" d="M290,1260 L300,1500"/><path vector-effect="non-scaling-stroke" d="M360,1260 L380,1500"/><path vector-effect="non-scaling-stroke" d="M1160,1180 C1200,1280 1230,1400 1260,1500"/><path vector-effect="non-scaling-stroke" d="M1130,1280 C1160,1350 1170,1430 1170,1500"/><path vector-effect="non-scaling-stroke" d="M870,1270 L860,1500"/><path vector-effect="non-scaling-stroke" d="M640,1260 L730,1500 M780,1300 L740,1500"/></g><g transform="translate(1260 500) scale(0.14999)"><path vector-effect="non-scaling-stroke" d="M790,125 L710,130 C680,115 640,120 600,160 L600,200 C550,150 480,140 400,160 C330,180 280,210 240,240 L270,230 C230,260 210,280 200,295 L250,320 C220,370 190,400 160,440 L180,470 C130,490 90,520 70,560 C50,620 80,680 150,720 L170,740 L180,730 C250,710 350,720 400,740"/><path vector-effect="non-scaling-stroke" d="M400,740 C440,720 480,740 520,780 L540,800"/><path vector-effect="non-scaling-stroke" d="M600,770 C680,760 760,770 800,800"/><path vector-effect="non-scaling-stroke" d="M460,420 L780,195"/><path vector-effect="non-scaling-stroke" d="M390,350 L420,335 L410,360 L430,380 L415,400 L460,430"/><path vector-effect="non-scaling-stroke" d="M455,470 C600,480 700,520 760,580 C800,630 820,680 830,720"/><path vector-effect="non-scaling-stroke" d="M625,330 C700,400 760,460 810,490"/><path vector-effect="non-scaling-stroke" d="M760,570 L880,490"/><path vector-effect="non-scaling-stroke" d="M800,180 C830,280 860,360 870,430 L860,460"/><path vector-effect="non-scaling-stroke" d="M800,175 L900,100 L910,0"/><path vector-effect="non-scaling-stroke" d="M905,150 L1060,310 L1140,320"/><path vector-effect="non-scaling-stroke" d="M860,450 L1060,320"/><path vector-effect="non-scaling-stroke" d="M1025,370 L1040,495 L1150,495 L1155,350 L1040,345"/><path vector-effect="non-scaling-stroke" d="M910,460 C930,600 950,700 970,800"/><path vector-effect="non-scaling-stroke" d="M1030,510 L995,800"/><path vector-effect="non-scaling-stroke" d="M1150,510 L1180,740"/><path vector-effect="non-scaling-stroke" d="M1220,370 C1230,500 1240,600 1250,700"/><path vector-effect="non-scaling-stroke" d="M1140,320 C1180,260 1200,150 1215,50 L1310,110 L1300,430 L1150,320"/><path vector-effect="non-scaling-stroke" d="M1330,170 C1400,200 1500,260 1580,310"/><path vector-effect="non-scaling-stroke" d="M1470,270 L1330,500"/><path vector-effect="non-scaling-stroke" d="M1250,480 L1400,570 C1480,520 1560,450 1580,380 C1580,360 1570,350 1560,345"/><path vector-effect="non-scaling-stroke" d="M1280,50 C1380,20 1450,20 1500,40 C1560,70 1620,100 1680,150 L1690,170 C1700,180 1720,200 1750,215 C1820,230 1860,280 1880,320 L1900,380 C1930,420 1950,450 1930,480 L1880,510 C1900,540 1910,560 1900,600 C1880,630 1830,650 1770,650 L1740,680 C1620,700 1500,730 1400,770"/><path vector-effect="non-scaling-stroke" d="M1920,520 L1930,600 L1900,640 C1890,690 1870,720 1850,740 C1700,760 1550,770 1380,780"/><path vector-effect="non-scaling-stroke" d="M1270,760 C1320,740 1370,740 1400,760"/><path vector-effect="non-scaling-stroke" d="M820,620 C870,680 900,740 910,800"/><path vector-effect="non-scaling-stroke" d="M1380,580 C1330,640 1300,700 1290,760"/><path vector-effect="non-scaling-stroke" d="M1090,0 C1080,60 1080,140 1090,220"/></g><g transform="translate(1220 640) scale(0.28000)"><path vector-effect="non-scaling-stroke" d="M230,0 L180,110 C130,180 90,230 80,280 L80,610 C120,640 200,650 320,645"/><path vector-effect="non-scaling-stroke" d="M160,120 C220,120 270,150 300,160"/><path vector-effect="non-scaling-stroke" d="M80,400 C120,370 170,380 200,390"/><path vector-effect="non-scaling-stroke" d="M280,210 C310,200 330,230 390,240 C420,270 420,330 410,400 L320,430 L270,300 Z"/><path vector-effect="non-scaling-stroke" d="M270,300 L240,330 C220,360 210,400 210,420 L205,525 C240,540 280,550 320,560"/><path vector-effect="non-scaling-stroke" d="M300,0 L310,220"/><path vector-effect="non-scaling-stroke" d="M380,0 L395,240"/><path vector-effect="non-scaling-stroke" d="M325,420 L340,700"/><path vector-effect="non-scaling-stroke" d="M390,420 L400,680"/><path vector-effect="non-scaling-stroke" d="M325,620 L400,610 L405,680 L330,680 Z"/><path vector-effect="non-scaling-stroke" d="M190,740 C250,720 300,700 340,690 L370,710 C400,730 430,900 465,1210 L260,1310 L230,1290 C200,1200 170,1050 170,950 L190,740"/><path vector-effect="non-scaling-stroke" d="M370,710 C360,900 360,1100 415,1260"/><path vector-effect="non-scaling-stroke" d="M165,1080 L360,1035"/><path vector-effect="non-scaling-stroke" d="M200,1030 L240,1020 L255,1115 L215,1125 Z"/><path vector-effect="non-scaling-stroke" d="M400,155 C480,140 560,180 620,220"/><path vector-effect="non-scaling-stroke" d="M415,550 C480,540 560,560 580,600"/><path vector-effect="non-scaling-stroke" d="M450,940 C500,930 560,950 580,960"/><path vector-effect="non-scaling-stroke" d="M470,1180 C500,1170 530,1170 550,1170"/><path vector-effect="non-scaling-stroke" d="M160,960 C120,1000 100,1200 120,1280"/><path vector-effect="non-scaling-stroke" d="M120,1290 C90,1350 80,1430 80,1500"/><path vector-effect="non-scaling-stroke" d="M650,0 L720,100 L800,0"/><path vector-effect="non-scaling-stroke" d="M645,30 C610,400 570,700 560,1000 C545,1200 545,1350 550,1500"/><path vector-effect="non-scaling-stroke" d="M610,840 C620,1000 630,1300 630,1500"/><path vector-effect="non-scaling-stroke" d="M810,0 C830,300 850,600 860,900 C870,1150 880,1350 890,1500"/><path vector-effect="non-scaling-stroke" d="M725,200 C705,215 715,245 740,240 C750,230 745,210 720,215"/><path vector-effect="non-scaling-stroke" d="M735,385 C710,400 715,430 735,425 C750,415 745,390 735,385"/><path vector-effect="non-scaling-stroke" d="M740,600 C720,610 725,640 745,635 C755,625 750,600 740,600"/><path vector-effect="non-scaling-stroke" d="M580,840 L725,825 L750,690 L775,800 L855,805"/><path vector-effect="non-scaling-stroke" d="M725,830 L730,970 L800,930 L795,840"/><path vector-effect="non-scaling-stroke" d="M735,1090 L785,1060 L770,1260 Z"/><path vector-effect="non-scaling-stroke" d="M850,240 C950,190 1100,170 1200,200"/><path vector-effect="non-scaling-stroke" d="M890,580 C1000,540 1150,550 1260,610"/><path vector-effect="non-scaling-stroke" d="M890,940 C1050,900 1200,910 1300,970"/><path vector-effect="non-scaling-stroke" d="M900,1210 C1050,1180 1250,1230 1420,1340"/><path vector-effect="non-scaling-stroke" d="M1165,0 C1220,180 1260,300 1270,450 L1280,580"/><path vector-effect="non-scaling-stroke" d="M1180,260 C1230,330 1260,420 1270,500"/><path vector-effect="non-scaling-stroke" d="M1280,650 C1320,750 1330,820 1330,900 L1300,970 C1350,1100 1370,1250 1380,1340"/><path vector-effect="non-scaling-stroke" d="M1420,1340 L1440,1500"/><path vector-effect="non-scaling-stroke" d="M1240,220 C1260,230 1270,260 1280,290"/><path vector-effect="non-scaling-stroke" d="M0,200 C20,240 20,300 0,340"/></g><g transform="translate(1220 1040) scale(0.28000)"><path vector-effect="non-scaling-stroke" d="M80,0 C70,80 80,150 95,200 C250,160 400,110 555,95 L545,0"/><path vector-effect="non-scaling-stroke" d="M95,200 C200,220 350,240 530,225"/><path vector-effect="non-scaling-stroke" d="M490,90 C520,200 550,280 580,300 C620,310 650,320 670,320"/><path vector-effect="non-scaling-stroke" d="M650,330 L740,290 L760,285 L780,300 L780,520 C750,580 710,610 690,600 C660,560 660,500 660,420 Z"/><path vector-effect="non-scaling-stroke" d="M655,340 L700,320 L750,360"/><path vector-effect="non-scaling-stroke" d="M630,0 L640,170"/><path vector-effect="non-scaling-stroke" d="M885,0 L890,40 C1000,50 1100,110 1200,140 C1300,170 1380,190 1400,200 C1420,160 1440,100 1440,0"/><path vector-effect="non-scaling-stroke" d="M1090,260 C1200,240 1300,230 1400,200"/><path vector-effect="non-scaling-stroke" d="M780,300 C790,500 800,700 805,900 L945,1020 L1090,900"/><path vector-effect="non-scaling-stroke" d="M1085,135 C1090,400 1060,700 1045,920"/><path vector-effect="non-scaling-stroke" d="M980,60 C970,400 950,700 950,960"/><path vector-effect="non-scaling-stroke" d="M860,960 C850,1010 840,1060 830,1120 L825,1240 C870,1260 920,1290 980,1310 C1050,1330 1100,1340 1155,1345 L1155,1300 C1100,1250 1050,1200 1030,1150 L1020,1120 L890,1140"/><path vector-effect="non-scaling-stroke" d="M1000,990 L1000,1120"/><path vector-effect="non-scaling-stroke" d="M880,980 L890,1100 M910,990 L920,1110 M940,1010 L950,1120"/><path vector-effect="non-scaling-stroke" d="M850,1030 L910,1120"/></g></g></svg>
<div class="ab" style="left:1785px;top:228px;width:101px;height:103px;background:transparent;border:3px solid #ff0000;border-bottom:none"></div>
<div class="ab" style="left:1674px;top:330px;width:326px;height:102px;background:#4f4f4f;"></div>
<div class="t" style="left:1723px;top:347px;font-size:21px;color:#dcdcdc;">73.9</div>
<div class="t" style="left:1736px;top:395px;font-size:21px;color:#dcdcdc;">0.0</div>
<svg style="left:0px;top:0px" width="10" height="10" viewBox="0 0 10 10"><circle cx="1787" cy="361" r="14" fill="none" stroke="#b8b8b8" stroke-width="2"/><path d="M1779 361 h16" stroke="#b8b8b8" stroke-width="2"/><circle cx="1832" cy="361" r="14" fill="none" stroke="#b8b8b8" stroke-width="2"/><path d="M1824 361 h16 M1832 353 v16" stroke="#b8b8b8" stroke-width="2"/><circle cx="1877" cy="361" r="14" fill="none" stroke="#b8b8b8" stroke-width="2"/><rect x="1870" y="354" width="14" height="14" rx="2" fill="#b8b8b8"/></svg>
<svg style="left:0px;top:0px" width="10" height="10" viewBox="0 0 10 10"><path d="M1905 345 V381 M1905 390 V427" stroke="#6a6a6a" stroke-width="2"/></svg>
<svg style="left:0px;top:0px" width="10" height="10" viewBox="0 0 10 10"><rect x="1917" y="349" width="16" height="16" rx="2" fill="none" stroke="#b8b8b8" stroke-width="2"/><rect x="1927" y="358" width="16" height="16" rx="2" fill="#4a4a4a" stroke="#b8b8b8" stroke-width="2"/><path d="M1922 354 L1938 370 M1922 354 h5 M1922 354 v5 M1938 370 h-5 M1938 370 v-5" stroke="#b8b8b8" stroke-width="2"/></svg>
<svg style="left:0px;top:0px" width="10" height="10" viewBox="0 0 10 10"><rect x="1963" y="350" width="22" height="22" rx="3" fill="none" stroke="#b8b8b8" stroke-width="2"/><path d="M1968 355 L1980 367 M1968 355 h5 M1968 355 v5 M1980 367 h-5 M1980 367 v-5" stroke="#b8b8b8" stroke-width="2"/></svg>
<svg style="left:0px;top:0px" width="10" height="10" viewBox="0 0 10 10"><path d="M1788.8 419.2 A11.2 11.2 0 1 0 1778.2 405" fill="none" stroke="#b8b8b8" stroke-width="2"/><path d="M1773.2 406.5 L1783.6 406.5 L1778.4 414.5 Z" fill="#b8b8b8"/></svg>
<svg style="left:0px;top:0px" width="10" height="10" viewBox="0 0 10 10"><path d="M1829.6 419.2 A11.2 11.2 0 1 1 1840.2 405" fill="none" stroke="#b8b8b8" stroke-width="2"/><path d="M1835 406.5 L1845.4 406.5 L1840.2 414.5 Z" fill="#b8b8b8"/></svg>
<svg style="left:0px;top:0px" width="10" height="10" viewBox="0 0 10 10"><path d="M1877 395.6 A12.6 12.6 0 1 1 1864.4 408.2" fill="none" stroke="#b8b8b8" stroke-width="2"/><path d="M1877 396 V408" stroke="#b8b8b8" stroke-width="2"/><circle cx="1877" cy="408.2" r="3.8" fill="#b8b8b8"/><circle cx="1872.2" cy="396.4" r="1.3" fill="#b8b8b8"/><circle cx="1868" cy="399.3" r="1.3" fill="#b8b8b8"/><circle cx="1865.2" cy="403.4" r="1.3" fill="#b8b8b8"/></svg>
<svg style="left:0px;top:0px" width="10" height="10" viewBox="0 0 10 10"><path d="M1916.5 400.5 L1925.5 408 L1916.5 415.5 Z" fill="none" stroke="#b8b8b8" stroke-width="2" stroke-linejoin="round"/><path d="M1929.9 396.2 V420.8" stroke="#b8b8b8" stroke-width="2"/><path d="M1944 400 L1933.2 408 L1944 416 Z" fill="#b8b8b8"/></svg>
<svg style="left:0px;top:0px" width="10" height="10" viewBox="0 0 10 10"><path d="M1966.5 394 H1982.7 L1974.6 404.4 Z" fill="#b8b8b8"/><path d="M1962.3 408.2 H1986.9" stroke="#b8b8b8" stroke-width="2"/><path d="M1967.5 421.8 H1981.7 L1974.6 412.6 Z" fill="none" stroke="#b8b8b8" stroke-width="2" stroke-linejoin="round"/></svg>
<div class="ab" style="left:1673px;top:432px;width:327px;height:17px;background:#333333;"></div>
<div class="ab" style="left:1674px;top:449px;width:326px;height:27px;background:#363636;"></div>
<div class="ab" style="left:1719px;top:449px;width:155px;height:27px;background:#4a4a4a;"></div>
<div class="ab" style="left:1880px;top:449px;width:56px;height:27px;background:#4a4a4a;"></div>
<div class="ab" style="left:1939px;top:449px;width:57px;height:27px;background:#4a4a4a;"></div>
<svg style="left:0px;top:0px" width="10" height="10" viewBox="0 0 10 10"><path d="M1689 453 h14 M1689 460 h14 M1689 467 h14" stroke="#8a8a8a" stroke-width="1.8"/></svg>
<svg style="left:0px;top:0px" width="10" height="10" viewBox="0 0 10 10"><circle cx="1746" cy="468" r="13" fill="none" stroke="#b8b8b8" stroke-width="2"/><rect x="1740" y="462" width="12" height="12" rx="2" fill="#b8b8b8"/></svg>
<div class="t" style="left:1773px;top:457px;width:103px;overflow:hidden;font-size:21px;color:#dedede">Color Whee</div>
<svg style="left:0px;top:0px" width="10" height="10" viewBox="0 0 10 10"><path d="M1898 472 L1910 460 L1924 468 L1912 478" fill="none" stroke="#8a8a8a" stroke-width="2"/><rect x="1956" y="458" width="28" height="18" rx="2" fill="#8a8a8a"/><rect x="1962" y="463" width="16" height="8" fill="#4a4a4a"/></svg>
<div class="ab" style="left:1674px;top:476px;width:326px;height:303px;background:#4f4f4f;"></div>
<div class="ab" style="left:1707px;top:488px;width:256px;height:256px;border-radius:50%;border:1.5px solid #2e2e2e;background:conic-gradient(rgb(239,239,11) 0deg,rgb(125,239,11) 30deg,rgb(11,239,11) 60deg,rgb(11,239,125) 90deg,rgb(11,239,239) 120deg,rgb(11,125,239) 150deg,rgb(11,11,239) 180deg,rgb(125,11,239) 210deg,rgb(239,11,239) 240deg,rgb(239,11,125) 270deg,rgb(239,11,11) 300deg,rgb(239,125,11) 330deg,rgb(239,239,11) 360deg)"></div>
<div class="ab" style="left:1728px;top:509px;width:214px;height:214px;border-radius:50%;background:#4f4f4f;border:1.5px solid #2e2e2e"></div>
<div class="ab" style="left:1770px;top:550px;width:132px;height:132px;background:linear-gradient(to top,#000,rgba(0,0,0,0)),linear-gradient(to right,#fff,#ff0000)"></div>
<svg style="left:0px;top:0px" width="10" height="10" viewBox="0 0 10 10"><rect x="1723" y="548" width="22" height="16" fill="#e01010" stroke="#fff" stroke-width="3" transform="rotate(30 1734 556)"/><rect x="1723" y="548" width="22" height="16" fill="none" stroke="#000" stroke-width="1" transform="rotate(30 1734 556)"/></svg>
<svg style="left:0px;top:0px" width="10" height="10" viewBox="0 0 10 10"><circle cx="1769" cy="682" r="7.5" fill="none" stroke="#fff" stroke-width="2.5"/><circle cx="1769" cy="682" r="9.5" fill="none" stroke="#111" stroke-width="1"/></svg>
<div class="ab" style="left:1695px;top:716px;width:35px;height:32px;background:transparent;border:1.5px solid #666;border-radius:6px"></div>
<div class="ab" style="left:1701px;top:720px;width:23px;height:22px;background:#9b5a56;"></div>
<div class="ab" style="left:1674px;top:697px;width:36px;height:36px;background:#7c93c8;border-radius:6px"></div>
<div class="ab" style="left:1679px;top:702px;width:26px;height:26px;background:#000;border-radius:2px"></div>
<div class="ab" style="left:1675px;top:752px;width:36px;height:19px;background:transparent;border:1.5px solid #666;border-radius:6px"></div>
<div class="ab" style="left:1681px;top:759px;width:24px;height:6px;background-image:linear-gradient(90deg,#fff 25%,#888 25%,#888 50%,#fff 50%,#fff 75%,#888 75%);background-size:12px 6px"></div>
<div class="ab" style="left:1742px;top:752px;width:16px;height:16px;background:#a9a9a9;border-radius:2px"></div>
<div class="t" style="left:1742.0px;top:753px;width:16px;text-align:center;font-size:15px;color:#4a4a4a;font-weight:bold">H</div>
<div class="ab" style="left:1805px;top:752px;width:16px;height:16px;background:#a9a9a9;border-radius:2px"></div>
<div class="t" style="left:1805.0px;top:753px;width:16px;text-align:center;font-size:15px;color:#4a4a4a;font-weight:bold">S</div>
<div class="ab" style="left:1867px;top:752px;width:16px;height:16px;background:#a9a9a9;border-radius:2px"></div>
<div class="t" style="left:1867.0px;top:753px;width:16px;text-align:center;font-size:15px;color:#4a4a4a;font-weight:bold">V</div>
<div class="t" style="left:1776.0px;top:749px;width:20px;text-align:center;font-size:21px;color:#dcdcdc;">0</div>
<div class="t" style="left:1838.0px;top:749px;width:20px;text-align:center;font-size:21px;color:#dcdcdc;">0</div>
<div class="t" style="left:1900.0px;top:749px;width:20px;text-align:center;font-size:21px;color:#dcdcdc;">0</div>
<svg style="left:0px;top:0px" width="10" height="10" viewBox="0 0 10 10"><circle cx="1964" cy="750" r="13" fill="none" stroke="#b8b8b8" stroke-width="2"/><path d="M1959 741 L1971 750 L1959 759 Z" fill="none" stroke="#b8b8b8" stroke-width="2"/></svg>
<div class="ab" style="left:1673px;top:779px;width:327px;height:18px;background:#333333;"></div>
<div class="ab" style="left:1674px;top:797px;width:326px;height:27px;background:#363636;"></div>
<div class="ab" style="left:1719px;top:797px;width:147px;height:27px;background:#444444;"></div>
<div class="ab" style="left:1866px;top:797px;width:150px;height:27px;background:#4a4a4a;"></div>
<svg style="left:0px;top:0px" width="10" height="10" viewBox="0 0 10 10"><path d="M1689 801 h14 M1689 808 h14 M1689 815 h14" stroke="#8a8a8a" stroke-width="1.8"/></svg>
<svg style="left:0px;top:0px" width="10" height="10" viewBox="0 0 10 10"><rect x="1732" y="804" width="27" height="19" rx="2" fill="none" stroke="#707070" stroke-width="2"/><rect x="1734" y="806" width="8" height="7" fill="#707070"/><rect x="1745" y="813" width="6" height="6" fill="#707070"/></svg>
<div class="t" style="left:1773px;top:805px;font-size:21px;color:#8a8a8a;">Color Set</div>
<svg style="left:0px;top:0px" width="10" height="10" viewBox="0 0 10 10"><path d="M1883 812 L1895 805 L1908 812 L1895 819 Z" fill="none" stroke="#b8b8b8" stroke-width="2"/><path d="M1883 818 L1895 825 L1908 818 M1883 824 L1895 831 L1908 824" fill="none" stroke="#b8b8b8" stroke-width="2"/></svg>
<div class="t" style="left:1922px;top:805px;font-size:21px;color:#dedede;">Layer</div>
<div class="ab" style="left:1674px;top:824px;width:326px;height:164px;background:#4f4f4f;"></div>
<div class="ab" style="left:1676px;top:834px;width:75px;height:47px;background:#5b5b5b;border:1.5px solid #707070;border-radius:5px"></div>
<svg style="left:0px;top:0px" width="10" height="10" viewBox="0 0 10 10"><rect x="1685" y="845" width="28" height="24" rx="4" fill="none" stroke="#b8b8b8" stroke-width="2"/><path d="M1727 853.1 L1735 845.6 L1743 853.1 M1727 860.9 L1735 868.4 L1743 860.9" fill="none" stroke="#b8b8b8" stroke-width="2"/></svg>
<div class="ab" style="left:1758px;top:834px;width:77px;height:47px;background:#616161;border:1.5px solid #707070;border-radius:5px"></div>
<div class="t" style="left:1764px;top:848px;width:38px;overflow:hidden;font-size:20px;color:#b5b5b5;letter-spacing:-1.5px">Norm</div>
<svg style="left:0px;top:0px" width="10" height="10" viewBox="0 0 10 10"><path d="M1811 853.1 L1819 845.6 L1827 853.1 M1811 860.9 L1819 868.4 L1827 860.9" fill="none" stroke="#b8b8b8" stroke-width="2"/></svg>
<div class="ab" style="left:1848px;top:845px;width:68px;height:14px;background-image:linear-gradient(45deg,#bbb 25%,transparent 25%,transparent 75%,#bbb 75%),linear-gradient(45deg,#bbb 25%,#eee 25%,#eee 75%,#bbb 75%);background-size:20px 14px;background-position:0 0,10px 7px;opacity:.9"></div>
<div class="ab" style="left:1915px;top:835px;width:7px;height:37px;background:#6e6e6e;border:1px solid #888;border-radius:2px"></div>
<div class="t" style="left:1934px;top:842px;font-size:21px;color:#dcdcdc;">100</div>
<svg style="left:0px;top:0px" width="10" height="10" viewBox="0 0 10 10"><path d="M1975 849.49 L1982 842.74 L1989 849.49 M1975 856.51 L1982 863.26 L1989 856.51" fill="none" stroke="#b8b8b8" stroke-width="2"/></svg>
<svg style="left:0px;top:0px" width="10" height="10" viewBox="0 0 10 10"><rect x="1727" y="897" width="20" height="20" rx="3" fill="#8e8e8e"/><rect x="1731" y="893" width="20" height="20" rx="3" fill="#bdbdbd" stroke="#4a4a4a" stroke-width="1"/><rect x="1733" y="893" width="20" height="20" rx="3" fill="none" stroke="#b8b8b8" stroke-width="2" stroke-dasharray="3 2"/></svg>
<svg style="left:0px;top:0px" width="10" height="10" viewBox="0 0 10 10"><path d="M1789 920 L1792.5 904 H1797.5 L1801 920 Z" fill="#b8b8b8"/><rect x="1791.5" y="897" width="7" height="7" fill="none" stroke="#b8b8b8" stroke-width="1.6"/><path d="M1791 899 L1781 896 M1799 899 L1809 896 M1791 903 L1781 906.5 M1799 903 L1809 906.5 M1795 893 V897" stroke="#b8b8b8" stroke-width="1.6"/></svg>
<svg style="left:0px;top:0px" width="10" height="10" viewBox="0 0 10 10"><rect x="1839" y="902" width="20" height="16" rx="3" fill="#b8b8b8"/><path d="M1843 903 V897 A6 6 0 0 1 1855 897 V903" fill="none" stroke="#b8b8b8" stroke-width="2.4"/></svg>
<svg style="left:0px;top:0px" width="10" height="10" viewBox="0 0 10 10"><rect x="1891" y="909" width="13" height="11" rx="2" fill="#b8b8b8"/><path d="M1893 910 V905 A4.5 4.5 0 0 1 1902 905 V910" fill="none" stroke="#b8b8b8" stroke-width="2"/><rect x="1898" y="893" width="7" height="7" fill="#909090"/><rect x="1912" y="893" width="7" height="7" fill="#909090"/><rect x="1905" y="900" width="7" height="7" fill="#909090"/><rect x="1912" y="907" width="7" height="7" fill="#909090"/></svg>
<div class="ab" style="left:1937px;top:884px;width:58px;height:44px;background:#4f4f4f;border-radius:4px"></div>
<svg style="left:0px;top:0px" width="10" height="10" viewBox="0 0 10 10"><rect x="1941" y="893" width="28" height="26" rx="5" fill="#5c5c5c"/><circle cx="1955" cy="905" r="7" fill="none" stroke="#4a4a4a" stroke-width="3"/><path d="M1961 911 L1972 922 M1972 911 L1961 922" stroke="#7a7a7a" stroke-width="2"/><path d="M1971 902.49 L1978 895.74 L1985 902.49 M1971 909.51 L1978 916.26 L1985 909.51" fill="none" stroke="#7a7a7a" stroke-width="2"/></svg>
<svg style="left:0px;top:0px" width="10" height="10" viewBox="0 0 10 10"><path d="M1687 945 h19 a3 3 0 0 1 3 3 v13 M1686 968 v-20 a3 3 0 0 1 3 -3 M1686 966 v3 a3 3 0 0 0 3 3 h10" fill="none" stroke="#b8b8b8" stroke-width="2"/><path d="M1686 962 L1694 971 L1686 971 Z" fill="#8a8a8a"/><circle cx="1708" cy="970" r="7" fill="#9a9a9a"/><path d="M1704 970 h8 M1708 966 v8" stroke="#4f4f4f" stroke-width="1.8"/></svg>
<svg style="left:0px;top:0px" width="10" height="10" viewBox="0 0 10 10"><path d="M1736 970 V947 h10 l3 3 h18 v12" fill="#a3a3a3"/><circle cx="1763" cy="969" r="7" fill="#9a9a9a" stroke="#4a4a4a" stroke-width="1"/><path d="M1759 969 h8 M1763 965 v8" stroke="#4a4a4a" stroke-width="1.8"/></svg>
<svg style="left:0px;top:0px" width="10" height="10" viewBox="0 0 10 10"><rect x="1802" y="947" width="21" height="19" rx="3" fill="none" stroke="#b8b8b8" stroke-width="2"/><rect x="1807" y="951" width="7" height="7" fill="#888"/><rect x="1791" y="957" width="20" height="18" rx="3" fill="#4a4a4a" stroke="#b8b8b8" stroke-width="2"/><path d="M1806 965 L1797 965 L1801 961" fill="none" stroke="#b8b8b8" stroke-width="2"/></svg>
<svg style="left:0px;top:0px" width="10" height="10" viewBox="0 0 10 10"><rect x="1857" y="947" width="21" height="19" rx="3" fill="none" stroke="#b8b8b8" stroke-width="2"/><rect x="1846" y="957" width="20" height="18" rx="3" fill="#4a4a4a" stroke="#b8b8b8" stroke-width="2"/><path d="M1862 960 L1853 969 M1853 963 V969 H1859" fill="none" stroke="#b8b8b8" stroke-width="2"/></svg>
<svg style="left:0px;top:0px" width="10" height="10" viewBox="0 0 10 10"><rect x="1902" y="946" width="28" height="28" rx="5" fill="#b8b8b8"/><circle cx="1916" cy="960" r="8" fill="#4a4a4a"/></svg>
<svg style="left:0px;top:0px" width="10" height="10" viewBox="0 0 10 10"><path d="M1960 950 h22 M1967 950 v-3 h8 v3 M1962 952 l2 22 h14 l2 -22 M1967 955 v16 M1971 955 v16 M1975 955 v16" fill="none" stroke="#b8b8b8" stroke-width="2"/></svg>
<div class="ab" style="left:1674px;top:988px;width:326px;height:512px;background:#3c3c3c;"></div>
<div class="ab" style="left:1770px;top:988px;width:214px;height:80px;background:#62687f;"></div>
<div class="ab" style="left:1676px;top:1067px;width:308px;height:3px;background:#262626;"></div>
<svg style="left:0px;top:0px" width="10" height="10" viewBox="0 0 10 10"><path d="M1682 1029 Q1697 1012 1712 1029" fill="none" stroke="#b0b0b0" stroke-width="2.2"/><circle cx="1697" cy="1029" r="6.5" fill="#b0b0b0"/></svg>
<svg style="left:0px;top:0px" width="10" height="10" viewBox="0 0 10 10"><path d="M1730 1038 L1733 1031 L1748 1016 Q1752 1013 1754 1017 L1739 1032 Z" fill="#b0b0b0"/><path d="M1729 1039 h27" stroke="#b0b0b0" stroke-width="2"/></svg>
<div class="ab" style="left:1777px;top:994px;width:58px;height:66px;background:#1e2030;border:2px solid #e8e8f0"></div>
<div class="ab" style="left:1783px;top:1000px;width:47px;height:57px;background-image:linear-gradient(45deg,#c8c8c8 25%,transparent 25%,transparent 75%,#c8c8c8 75%),linear-gradient(45deg,#c8c8c8 25%,#fff 25%,#fff 75%,#c8c8c8 75%);background-size:16px 16px;background-position:0 0,8px 8px"></div>
<div class="t" style="left:1847px;top:999px;font-size:21px;color:#e3e3e3;">100 %</div>
<div class="t" style="left:1914px;top:1000px;width:26px;overflow:hidden;font-size:20px;color:#b8b8b8;letter-spacing:-1px">Nor</div>
<div class="t" style="left:1847px;top:1037px;font-size:21px;color:#e3e3e3;">Layer 3</div>
<svg style="left:0px;top:0px" width="10" height="10" viewBox="0 0 10 10"><path d="M1957 1022 h14 M1957 1029 h14 M1957 1036 h14" stroke="#1a1a1a" stroke-width="2"/></svg>
<div class="ab" style="left:1676px;top:1147px;width:308px;height:3px;background:#262626;"></div>
<svg style="left:0px;top:0px" width="10" height="10" viewBox="0 0 10 10"><path d="M1682 1109 Q1697 1092 1712 1109" fill="none" stroke="#b0b0b0" stroke-width="2.2"/><circle cx="1697" cy="1109" r="6.5" fill="#b0b0b0"/></svg>
<div class="ab" style="left:1737px;top:1099px;width:19px;height:19px;background:transparent;border:2px solid #262626;border-radius:4px"></div>
<div class="ab" style="left:1781px;top:1078px;width:51px;height:61px;background:#222;"></div>
<div class="ab" style="left:1783px;top:1080px;width:47px;height:57px;background-image:linear-gradient(45deg,#c8c8c8 25%,transparent 25%,transparent 75%,#c8c8c8 75%),linear-gradient(45deg,#c8c8c8 25%,#fff 25%,#fff 75%,#c8c8c8 75%);background-size:16px 16px;background-position:0 0,8px 8px"></div>
<svg style="left:0px;top:0px" width="10" height="10" viewBox="0 0 10 10"><path d="M1818 1098 l4 6 M1820 1108 l-3 8 M1822 1118 l2 10 M1816 1123 l3 4" stroke="#777" stroke-width="1.2"/></svg>
<div class="t" style="left:1847px;top:1079px;font-size:21px;color:#e3e3e3;">100 %</div>
<div class="t" style="left:1914px;top:1080px;width:26px;overflow:hidden;font-size:20px;color:#b8b8b8;letter-spacing:-1px">Nor</div>
<div class="t" style="left:1847px;top:1117px;font-size:21px;color:#e3e3e3;">Layer 2</div>
<svg style="left:0px;top:0px" width="10" height="10" viewBox="0 0 10 10"><path d="M1957 1102 h14 M1957 1109 h14 M1957 1116 h14" stroke="#9a9a9a" stroke-width="2"/></svg>
<div class="ab" style="left:1676px;top:1227px;width:308px;height:3px;background:#262626;"></div>
<svg style="left:0px;top:0px" width="10" height="10" viewBox="0 0 10 10"><path d="M1682 1189 Q1697 1172 1712 1189" fill="none" stroke="#b0b0b0" stroke-width="2.2"/><circle cx="1697" cy="1189" r="6.5" fill="#b0b0b0"/></svg>
<div class="ab" style="left:1737px;top:1179px;width:19px;height:19px;background:transparent;border:2px solid #262626;border-radius:4px"></div>
<div class="ab" style="left:1781px;top:1158px;width:51px;height:61px;background:#222;"></div>
<div class="ab" style="left:1783px;top:1160px;width:47px;height:57px;background-image:linear-gradient(45deg,#c8c8c8 25%,transparent 25%,transparent 75%,#c8c8c8 75%),linear-gradient(45deg,#c8c8c8 25%,#fff 25%,#fff 75%,#c8c8c8 75%);background-size:16px 16px;background-position:0 0,8px 8px"></div>
<svg style="left:0px;top:0px" width="10" height="10" viewBox="0 0 10 10"><path d="M1790 1183 l6 4 l6 -3 M1800 1193 l4 8 M1806 1186 l3 6 M1794 1203 l2 8 M1808 1206 l5 3" stroke="#888" stroke-width="1.2"/></svg>
<div class="t" style="left:1847px;top:1159px;font-size:21px;color:#e3e3e3;">100 %</div>
<div class="t" style="left:1914px;top:1160px;width:26px;overflow:hidden;font-size:20px;color:#b8b8b8;letter-spacing:-1px">Nor</div>
<div class="t" style="left:1847px;top:1197px;font-size:21px;color:#e3e3e3;">Layer 1</div>
<svg style="left:0px;top:0px" width="10" height="10" viewBox="0 0 10 10"><path d="M1957 1182 h14 M1957 1189 h14 M1957 1196 h14" stroke="#9a9a9a" stroke-width="2"/></svg>
<div class="ab" style="left:1676px;top:1307px;width:308px;height:3px;background:#262626;"></div>
<div class="ab" style="left:1688px;top:1259px;width:19px;height:19px;background:transparent;border:2px solid #262626;border-radius:4px"></div>
<div class="ab" style="left:1737px;top:1259px;width:19px;height:19px;background:transparent;border:2px solid #262626;border-radius:4px"></div>
<div class="ab" style="left:1781px;top:1238px;width:51px;height:61px;background:#222;"></div>
<div class="ab" style="left:1783px;top:1240px;width:47px;height:57px;background-image:linear-gradient(45deg,#c8c8c8 25%,transparent 25%,transparent 75%,#c8c8c8 75%),linear-gradient(45deg,#c8c8c8 25%,#fff 25%,#fff 75%,#c8c8c8 75%);background-size:16px 16px;background-position:0 0,8px 8px"></div>
<svg style="left:0px;top:0px" width="10" height="10" viewBox="0 0 10 10"><path d="M1792 1268 q10 -6 22 -4 q8 -14 -2 -18 q-8 -2 -6 8 q-8 -6 -14 4 Z" fill="#c9928a"/><circle cx="1800" cy="1256" r="6" fill="#e0c070"/><path d="M1806 1244 q8 -4 12 4 l2 16 q-6 2 -10 -4 Z" fill="#222"/></svg>
<div class="t" style="left:1847px;top:1239px;font-size:21px;color:#e3e3e3;">100 %</div>
<div class="t" style="left:1914px;top:1240px;width:26px;overflow:hidden;font-size:20px;color:#b8b8b8;letter-spacing:-1px">Nor</div>
<div class="t" style="left:1847px;top:1277px;font-size:21px;color:#e3e3e3;">Layer 8</div>
<svg style="left:0px;top:0px" width="10" height="10" viewBox="0 0 10 10"><path d="M1957 1262 h14 M1957 1269 h14 M1957 1276 h14" stroke="#9a9a9a" stroke-width="2"/></svg>
<div class="ab" style="left:1676px;top:1387px;width:308px;height:3px;background:#262626;"></div>
<svg style="left:0px;top:0px" width="10" height="10" viewBox="0 0 10 10"><path d="M1682 1349 Q1697 1332 1712 1349" fill="none" stroke="#b0b0b0" stroke-width="2.2"/><circle cx="1697" cy="1349" r="6.5" fill="#b0b0b0"/></svg>
<div class="ab" style="left:1737px;top:1339px;width:19px;height:19px;background:transparent;border:2px solid #262626;border-radius:4px"></div>
<div class="ab" style="left:1781px;top:1318px;width:51px;height:61px;background:#222;"></div>
<div class="ab" style="left:1783px;top:1320px;width:47px;height:57px;background:#ffffff;"></div>
<div class="ab" style="left:1855px;top:1317px;width:35px;height:34px;background:#fff;border:1.5px solid #333"></div>
<svg style="left:0px;top:0px" width="10" height="10" viewBox="0 0 10 10"><path d="M1865 1322 h14 a2 2 0 0 1 2 2 v21 h-13 l-6 -6 v-15 a2 2 0 0 1 2 -2 Z" fill="none" stroke="#333" stroke-width="2.2"/></svg>
<div class="t" style="left:1847px;top:1358px;font-size:21px;color:#e3e3e3;">Paper</div>
<svg style="left:0px;top:0px" width="10" height="10" viewBox="0 0 10 10"><path d="M1957 1342 h14 M1957 1349 h14 M1957 1356 h14" stroke="#9a9a9a" stroke-width="2"/></svg>
<div class="ab" style="left:1723px;top:988px;width:2px;height:400px;background:#262626;"></div>
<div class="ab" style="left:1768px;top:988px;width:2px;height:400px;background:#262626;"></div>
<div class="ab" style="left:1998px;top:88px;width:2px;height:1412px;background:#333333;"></div>
</body></html>
